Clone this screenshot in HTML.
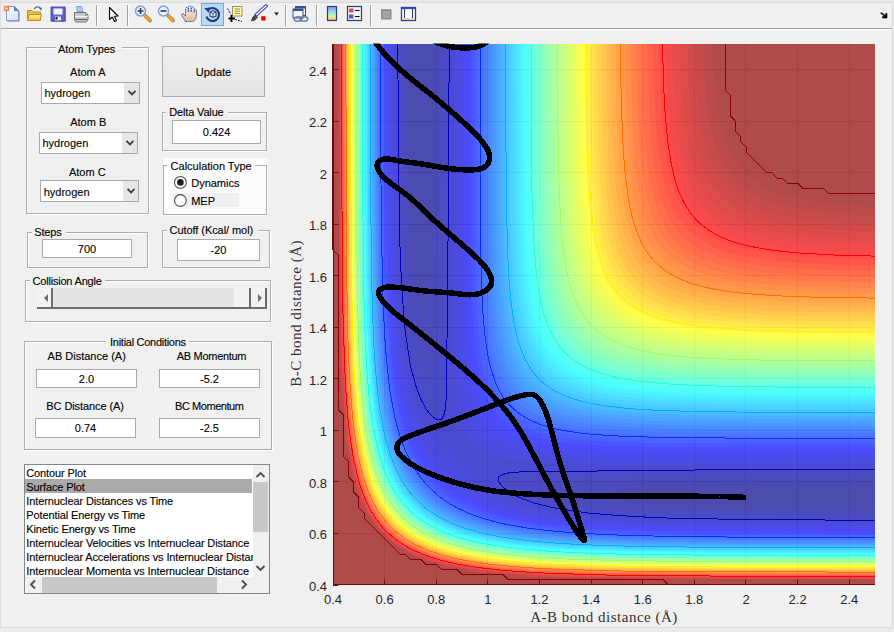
<!DOCTYPE html>
<html><head><meta charset="utf-8">
<style>
*{box-sizing:border-box}
html,body{margin:0;padding:0}
body{width:894px;height:632px;background:#f0f0f0;position:relative;overflow:hidden;font-family:"Liberation Sans",sans-serif;font-size:11px;color:#000}
.plot{position:absolute;left:0;top:0}
.abs{position:absolute}
.t{position:absolute;white-space:nowrap;line-height:13px;height:13px;-webkit-text-stroke:0.12px #000}
.ew{position:absolute;border:1px solid #fff}
.eg{position:absolute;border:1px solid #acacac}
.ed{position:absolute;background:#fff;border:1px solid #a9a9a9}
.pp{position:absolute;background:#fff;border:1px solid #a7a9ae}
.pa{position:absolute;right:0;top:0;width:15px;height:100%;background:#e6e6e6}
.btn{position:absolute;background:linear-gradient(#f0f0f0,#e5e5e5);border:1px solid #acacac}
</style></head><body>
<div class="abs" style="left:0;top:0;width:894px;height:2px;background:#e8e8e8"></div>
<div class="abs" style="left:0;top:2px;width:893px;height:1px;background:#dadada"></div>
<div class="abs" style="left:0;top:28px;width:893px;height:1px;background:#a0a0a0"></div>
<div class="abs" style="left:0;top:29px;width:893px;height:1px;background:#fdfdfd"></div>
<div class="abs" style="left:892px;top:2px;width:1px;height:626px;background:#dcdcdc"></div>
<div class="abs" style="left:0;top:627px;width:893px;height:1px;background:#dcdcdc"></div>
<div class="abs" style="left:893px;top:0;width:1px;height:632px;background:#ebebeb"></div>
<div class="abs" style="left:0;top:0;width:1px;height:628px;background:#dcdcdc"></div>
<div class="abs" style="left:0;top:628px;width:894px;height:4px;background:#ebebeb"></div>
<svg class="abs" style="left:0;top:0" width="894" height="30">
<defs>
<linearGradient id="gdoc" x1="0" y1="0" x2="1" y2="1"><stop offset="0" stop-color="#ffffff"/><stop offset="1" stop-color="#cfe0f8"/></linearGradient>
<linearGradient id="gfold" x1="0" y1="0" x2="0" y2="1"><stop offset="0" stop-color="#fff4b0"/><stop offset="1" stop-color="#f0c030"/></linearGradient>
<linearGradient id="gcb" x1="0" y1="0" x2="0" y2="1"><stop offset="0" stop-color="#8f8fe8"/><stop offset="0.45" stop-color="#8ee8e8"/><stop offset="0.75" stop-color="#f0f090"/><stop offset="1" stop-color="#f0a070"/></linearGradient>
<linearGradient id="gskin" x1="0" y1="0" x2="0" y2="1"><stop offset="0" stop-color="#fdf0e0"/><stop offset="1" stop-color="#e8b890"/></linearGradient>
</defs>
<rect x="96" y="5" width="1" height="21" fill="#a0a0a0"/><rect x="97" y="5" width="1" height="21" fill="#fff"/><rect x="127" y="5" width="1" height="21" fill="#a0a0a0"/><rect x="128" y="5" width="1" height="21" fill="#fff"/><rect x="285" y="5" width="1" height="21" fill="#a0a0a0"/><rect x="286" y="5" width="1" height="21" fill="#fff"/><rect x="316" y="5" width="1" height="21" fill="#a0a0a0"/><rect x="317" y="5" width="1" height="21" fill="#fff"/><rect x="370" y="5" width="1" height="21" fill="#a0a0a0"/><rect x="371" y="5" width="1" height="21" fill="#fff"/>
<!-- new doc -->
<path d="M7.5,7.5 H15.5 L19.5,11.5 V21.5 H7.5Z" fill="#6e78a8"/>
<path d="M6.5,6.5 H14.5 L18.5,10.5 V20.5 H6.5Z" fill="url(#gdoc)" stroke="#7f9ad8" stroke-width="1"/>
<path d="M14.5,6.5 V10.5 H18.5" fill="#7080c0" stroke="#6070b0" stroke-width="1"/>
<circle cx="6.5" cy="8.5" r="2.2" fill="#f6e080" stroke="#e87850" stroke-width="1.2"/>
<path d="M3.5,5.5 l1,1 M9.5,5.5 l-1,1 M3.5,11.5 l1,-1 M9.5,11.5 l-1,-1" stroke="#e87850" stroke-width="1"/>
<!-- open folder -->
<path d="M27.5,10.5 H32 L33.5,12 H40.5 V20.5 H27.5Z" fill="#e8c040" stroke="#c09020" stroke-width="1"/>
<path d="M29,14.5 H41.5 L40,20.5 H27.5Z" fill="url(#gfold)" stroke="#c09020" stroke-width="1"/>
<path d="M34,9 Q37,5.5 40.5,8" fill="none" stroke="#5070a0" stroke-width="1.2"/>
<path d="M39,8.5 L42,7.5 L41.2,10.5Z" fill="#405890"/>
<!-- save -->
<rect x="51.5" y="7.5" width="14" height="14" fill="#3a3a9a"/>
<rect x="51" y="7" width="14" height="14" fill="#6262cc" stroke="#4040a0" stroke-width="0.8"/>
<rect x="53.5" y="8.5" width="9" height="6" fill="#f4f4ff"/>
<rect x="55" y="16.5" width="6" height="4" fill="#e8e8f0"/>
<rect x="55.5" y="17" width="2" height="2.5" fill="#202020"/>
<!-- print -->
<path d="M76.5,6.5 H81.5 L83,11.5 H77.5Z" fill="#a8d0f8" stroke="#7090c0" stroke-width="0.8"/>
<path d="M74.5,12.5 H86 L88,15.5 V20 L86,22 H76 L74.5,20Z" fill="#c8c8c8" stroke="#707070" stroke-width="1"/>
<path d="M75,16.5 H87.5" stroke="#f8f8f8" stroke-width="1.2"/>
<path d="M75.5,19.5 H87" stroke="#5a5a5a" stroke-width="1"/>
<rect x="85" y="14.5" width="1.5" height="1.5" fill="#40c040"/>
<!-- arrow -->
<path d="M109.5,7.5 V19.5 L112.3,17 L114.5,21.5 L116.5,20.5 L114.4,16.2 L118,16Z" fill="#fff" stroke="#000" stroke-width="1.1" stroke-linejoin="round"/>
<!-- zoom in -->
<path d="M145,15.5 L150,20.5" stroke="#a86810" stroke-width="3.6" stroke-linecap="round"/>
<path d="M145,15.5 L150,20.5" stroke="#f0a840" stroke-width="2.2" stroke-linecap="round"/>
<circle cx="140.5" cy="11" r="5" fill="#e4f4fc" stroke="#8894cc" stroke-width="1.3"/>
<path d="M137.5,11 H143.5 M140.5,8 V14" stroke="#203880" stroke-width="1.6"/>
<!-- zoom out -->
<path d="M168,15.5 L173,20.5" stroke="#a86810" stroke-width="3.6" stroke-linecap="round"/>
<path d="M168,15.5 L173,20.5" stroke="#f0a840" stroke-width="2.2" stroke-linecap="round"/>
<circle cx="163.5" cy="11" r="5" fill="#e4f4fc" stroke="#8894cc" stroke-width="1.3"/>
<path d="M160.5,11 H166.5" stroke="#203880" stroke-width="1.6"/>
<!-- hand -->
<path d="M185.5,21.5 L181.8,15.5 Q181.2,13.2 183.5,13.8 L185.5,16 V9 Q185.6,7.2 187.2,7.4 Q188.3,7.6 188.3,9 V12 V7.2 Q188.5,5.6 190,5.8 Q191.2,6 191.2,7.4 V12 V8.2 Q191.6,6.8 193,7 Q194.2,7.3 194.2,8.8 V12.5 V10.5 Q194.6,9.4 195.6,9.6 Q196.6,9.9 196.5,11.5 L196.3,16.5 Q195.5,20.2 193.5,21.5Z" fill="url(#gskin)" stroke="#2850d8" stroke-width="1" stroke-dasharray="1.6 0.7"/>
<!-- rotate (pressed) -->
<rect x="201.5" y="3.5" width="22" height="22" fill="#bcd8f4" stroke="#6aa8e8" stroke-width="1"/>
<path d="M207.9,9.9 A6.5,6.5 0 1 1 206.4,16.7" fill="none" stroke="#243c78" stroke-width="2.2"/>
<path d="M204.3,8.2 L209.8,7.6 L208.6,12.8Z" fill="#243c78"/>
<path d="M210,12 L213,10.5 L216,12 V16 L213,17.5 L210,16Z" fill="#f0f4fc" stroke="#243c78" stroke-width="1.1"/>
<path d="M210,12 L213,13.5 L216,12 M213,13.5 V17.5" fill="none" stroke="#243c78" stroke-width="0.9"/>
<!-- data cursor -->
<rect x="232.5" y="6.5" width="9.5" height="9.5" fill="#fdf6b8" stroke="#9a9a48" stroke-width="1"/>
<path d="M234.5,9 H240 M234.5,11.2 H240 M234.5,13.4 H240" stroke="#8c8c40" stroke-width="0.9"/>
<path d="M227.5,8.5 L231,14.5 M235,19.5 L242,21.5" stroke="#0000f0" stroke-width="1" stroke-dasharray="2 1"/>
<path d="M228.5,18.5 H235 M231.5,15 V22" stroke="#000" stroke-width="1.9"/>
<!-- brush -->
<path d="M256,15 L266,6" stroke="#3a48a8" stroke-width="3.6" stroke-linecap="round"/>
<path d="M256,15 L266,6" stroke="#ffffff" stroke-width="1.4" stroke-linecap="round"/>
<path d="M251.5,21 Q252,16.5 255.5,15 L257.5,17 Q256,20.5 251.5,21Z" fill="#505050" stroke="#303030" stroke-width="0.8"/>
<rect x="260.8" y="15.8" width="5.2" height="5.2" fill="#ee0000" stroke="#fff" stroke-width="0.8"/>
<path d="M274,12.5 H279 L276.5,15.5Z" fill="#202020"/>
<!-- link -->
<rect x="295.5" y="6.5" width="10" height="9" fill="#f4f4f4" stroke="#38508a" stroke-width="1"/>
<rect x="295.5" y="6.5" width="10" height="2" fill="#38508a"/>
<rect x="293" y="9" width="10" height="9" fill="#f4f4f4" stroke="#38508a" stroke-width="1"/>
<rect x="293" y="9" width="10" height="2" fill="#38508a"/>
<ellipse cx="298" cy="19" rx="3.8" ry="2.2" fill="none" stroke="#6a7aa0" stroke-width="1.4"/>
<ellipse cx="304" cy="19" rx="3.8" ry="2.2" fill="none" stroke="#6a7aa0" stroke-width="1.4"/>
<!-- colorbar -->
<rect x="327.5" y="6.5" width="9" height="14" fill="url(#gcb)" stroke="#303e78" stroke-width="1.2"/>
<!-- legend -->
<rect x="347.5" y="6.5" width="14" height="14" fill="#f2f4fa" stroke="#303e78" stroke-width="1.2"/>
<rect x="349" y="8.5" width="4.5" height="4" fill="#e05050"/>
<rect x="349" y="14.5" width="4.5" height="4" fill="#5858e0"/>
<path d="M355,10.5 H359.5 M355,16.5 H359.5" stroke="#000" stroke-width="1.2"/>
<!-- gray square -->
<rect x="381" y="9.2" width="10.5" height="10.3" fill="#8c8c8c"/>
<rect x="382.5" y="11" width="7.5" height="7" fill="#a4a4a4"/>
<!-- window -->
<rect x="401.5" y="7.5" width="14" height="13" fill="#fff" stroke="#2c3e88" stroke-width="1.3"/>
<rect x="401.5" y="7.5" width="14" height="1.6" fill="#3050b0"/>
<path d="M404.5,9 V18 M412.5,9 V18" stroke="#2c3e88" stroke-width="1.1"/>
<rect x="402.3" y="18" width="12.5" height="2" fill="#d8d4b8"/>
<!-- corner arrow -->
<path d="M880.5,13 L882,12.8 L885.5,16 V13.5 H887 V18 H882.5 V16.5 H884.8 L881,13.5Z" fill="#000" stroke="#000" stroke-width="0.6"/>
</svg>
<svg class="plot" width="894" height="632" viewBox="0 0 894 632">
<defs><clipPath id="ax"><rect x="333" y="44" width="542" height="541"/></clipPath>
<clipPath id="tj"><rect x="300" y="43.5" width="594" height="560"/></clipPath></defs>
<rect x="333" y="44" width="542" height="541" fill="#fff"/>
<path d="M384.5,44V585M436.5,44V585M487.5,44V585M539.5,44V585M591.5,44V585M642.5,44V585M694.5,44V585M745.5,44V585M797.5,44V585M849.5,44V585M333,533.5H875M333,481.5H875M333,430.5H875M333,378.5H875M333,327.5H875M333,275.5H875M333,224.5H875M333,172.5H875M333,121.5H875M333,69.5H875" stroke="#dedede" stroke-width="1" fill="none"/>
<path d="M333.5,585v-5.4M333,585.5h5.4M384.5,585v-5.4M333,533.5h5.4M436.5,585v-5.4M333,481.5h5.4M487.5,585v-5.4M333,430.5h5.4M539.5,585v-5.4M333,378.5h5.4M591.5,585v-5.4M333,327.5h5.4M642.5,585v-5.4M333,275.5h5.4M694.5,585v-5.4M333,224.5h5.4M745.5,585v-5.4M333,172.5h5.4M797.5,585v-5.4M333,121.5h5.4M849.5,585v-5.4M333,69.5h5.4" stroke="#262626" stroke-width="1" fill="none"/>
<path d="M333.5,44V584.5H875" stroke="#262626" stroke-width="1" fill="none"/>
<g clip-path="url(#ax)" opacity="0.7" fill-rule="evenodd">
<rect x="333" y="44" width="542" height="541" fill="#8f0000"/>
<path fill="#9f0000" d="M711.5,44 713,69.5 715,90.6 717.9,111.1 721.1,126.4 725.3,140.2 730.5,152.6 736.4,162.8 745.1,173.3 756,182.3 766.2,188.3 778.6,193.5 792.5,197.6 807.8,200.8 828.3,203.7 849.4,205.7 875,207.2 875,579.7 585.8,579.1 528.2,578.2 517.3,577.1 513.5,576.1 511.1,574.8 473.8,573.1 468.7,572 465.4,569.7 462.4,569 445.6,567.9 442.4,566.8 439.7,564.6 426.4,562.4 424.5,561.4 423,559.5 421.7,558.8 414.1,557.5 411.9,556.3 410.4,554.1 403.4,552.1 400.6,548.6 396.4,547.5 393.8,546.1 391.5,543.5 387.4,541.1 384.8,537.5 381.9,535.8 380.6,533.3 377,530.7 374.6,526.6 372,524.3 370.6,521.8 369.5,517.6 365.9,514.7 364,507.7 361.8,506.2 360.5,504.1 359.2,496.5 358.6,495.2 356.6,493.7 355.4,491.1 353.5,478.4 351.2,475.8 350,471.9 349,456 348.4,452.8 346.3,450.2 345,445.1 343.9,414.5 343.2,407.2 341.4,403 340.3,396.6 339.2,370.4 338.3,44 711.5,44Z"/>
<path fill="#af0000" d="M702.8,44 704.4,74.7 706.3,95.7 709,116.2 712.6,134.1 716.5,147.5 722.7,162.2 729.4,173 736.8,181.7 745.7,189.4 756.6,196 769.4,201.5 783.5,205.8 802.7,209.7 823.2,212.4 844.3,214.3 875,215.9 875,579.2 604.3,578.6 560.8,578.1 537.1,577.3 527.5,576.5 518.7,574.8 511.2,574.1 478.9,572.4 473.1,571.3 469.2,569.7 465.9,569 448.8,567.1 445.6,566.2 441.1,564 428.3,561.5 423.8,558.8 415.5,556.6 411.6,553.7 404.7,551.2 402,548.6 396.4,546 388.9,540.3 382.9,534.7 377.8,529.2 372.1,521.8 369.5,516.2 366.9,513.5 364.4,506.6 361.4,502.6 359.2,494.3 356.1,488.6 354,477.1 351,470 349,452.3 345.8,440.4 343.2,399.7 341.9,393.4 340.9,383.8 339.8,354.4 338.8,44 702.8,44Z"/>
<path fill="#bf0000" d="M694.6,44 696,74.7 698,100.8 700.6,121.3 704.6,141.7 709.4,157.7 715,170.5 720.8,180 728.8,189.6 738.7,197.9 748.2,203.7 761.1,209.3 777.1,214.1 797.6,218.1 818,220.6 844.3,222.7 875,224.1 875,578.7 617.1,578 571,577.5 544.8,576.6 527.3,574.8 483.4,571.8 462.3,567.8 451.4,566.5 443.5,563.9 430.3,560.9 426,558.8 416.8,555.9 413.2,553.7 405.9,550.6 391.9,541.3 383.7,533.9 376.7,526.2 367.1,511.5 364.8,505.8 362.2,501.3 359.2,492.2 356.7,486.6 354.1,474.7 351.5,466.8 350.2,456 346.4,436.2 343.2,391.1 341.5,374.9 340.4,342.9 339.3,44 694.6,44Z"/>
<path fill="#cf0000" d="M686.8,44 688.3,79.8 690.2,105.3 692.8,127 696.5,146.8 701,162.8 706.7,176.5 713.8,188.4 721.4,197.3 730.4,204.9 742.2,212 756,217.7 772,222.2 791.8,225.9 813.6,228.5 839.2,230.4 875,231.8 875,578.1 626.7,577.5 580,576.9 549.9,575.9 487.9,571.4 453.9,566.1 431.5,560.3 418.1,555.4 407.2,550.2 392.5,540.7 382.9,531.8 377.2,525.2 367.6,510.4 362.7,500 357.1,484.7 352.1,464.9 347,433.6 342.2,368.5 341,332.7 340.3,249.7 339.9,44 686.8,44Z"/>
<path fill="#df0000" d="M679.4,44 680.8,80.4 682.8,110.4 685.2,131.5 688.8,151.9 693.1,167.9 699.2,183.2 705.1,193.5 709.4,199.2 714.4,204.6 725.3,213.6 735.5,219.4 750.9,225.5 766.9,229.8 787.3,233.4 808.4,235.8 838.5,237.9 875,239.2 875,577.6 612,576.8 569.1,575.9 529.5,573.7 489.8,570.8 455.2,565.5 433.5,560 419.4,555 408.4,549.9 393.5,540.3 383.6,531.3 377.6,524.3 368.1,509.6 363.1,498.8 357.6,483.4 352.4,462.4 347.4,430.4 342.7,362.1 341.5,326.3 340.8,249.7 340.4,44 679.4,44Z"/>
<path fill="#ef0000" d="M672.4,44 673.6,80.4 675.5,111.1 678.1,136.6 681.6,157.1 685.7,173 691.6,188.4 699,201.4 707.4,211.3 717.3,219.6 730.4,227.1 745.7,233 761.7,237 782.2,240.5 807.8,243.2 838.5,245 875,246.2 875,577.1 669,576.6 590.9,575.8 519.2,572.5 493,570.4 472.5,567.6 456.5,565 434.7,559.6 415.5,552.4 409.1,549.4 400.2,544.1 388,534.6 378.6,524.3 374,517.9 369.1,509.6 363.4,497.5 358.4,483.4 355.4,471.9 352.9,461.1 350.4,445.8 347.3,422.1 344,373.6 342.4,333.3 341.6,286.7 340.9,44 672.4,44Z"/>
<path fill="#ff0000" d="M665.7,44 666.9,84.9 668.7,116.2 671.4,141.7 674.7,162.2 678.6,178.1 684.3,193.6 688.8,202.3 692.1,207.5 700.6,217.7 710.5,226.1 716.4,229.9 725.2,234.3 740.6,240 756.6,243.9 777.1,247.3 802.7,249.9 834,251.7 875,252.9 875,576.6 678.5,576.2 596,575.2 523.7,572.2 496.2,570.1 471.9,566.9 452,563.3 431.5,557.8 415.5,551.6 400.7,543.5 388.7,534.1 379.1,523.7 374.6,517.4 369.5,508.8 363.7,496.4 358.8,482.2 356.1,471.9 353.4,459.8 351,445.8 347.8,420.2 344.6,373.6 342.9,327.6 342.1,281 341.4,44 665.7,44Z"/>
<path fill="#ff1000" d="M659.3,44 660.4,85.5 662.4,121.3 664.9,146.8 668.3,167.9 673.3,187.7 678.5,201.1 685.8,213.9 694.5,224.4 704.8,232.8 717.7,240.1 731,245.3 751.5,250.5 772,253.7 797.6,256.3 833.4,258.2 875,259.3 875,576.1 676,575.6 590.9,574.5 549.9,573.1 518.6,571.3 493.6,569.1 467.4,565.6 441.7,560.1 425.8,555.1 410.9,548.6 400.2,542.2 389.3,533.6 379.6,523 374.6,516 369.7,507.7 364.4,496 358.1,477.1 354.3,461.1 351.8,446.4 348.2,417.7 345.2,373.6 343.6,327.6 342.7,275.9 342,44 659.3,44Z"/>
<path fill="#ff2000" d="M653.1,44 654.1,85.5 655.9,121.3 658.1,147.5 661.9,172.4 667.2,193.5 672.8,207.8 679.2,219.2 688.1,230.1 699,239.1 709.9,245.4 725.3,251.5 746.4,256.7 771.3,260.5 797.6,262.7 833.4,264.5 875,265.5 875,575.5 680.5,575.1 591.5,573.9 549.9,572.5 519.2,570.8 498.1,569 472.5,565.7 451.4,561.8 431.5,556.3 415.5,550 403.6,543.5 396.2,538.4 390.1,533.3 380.6,523 373.5,512.8 365.8,497.5 358.6,476.4 353.2,451.5 348.5,415.1 346,378.7 344.3,332.1 343.2,270.7 342.5,44 653.1,44Z"/>
<path fill="#ff3000" d="M647.2,44 648.2,90.6 650,126.4 652.6,155.8 655.8,176.9 660.6,197.1 666.4,212.6 673.4,225.2 682.4,236.1 693.4,245.2 704.8,251.6 720.1,257.5 741.3,262.7 761.7,265.9 792.5,268.6 828.3,270.3 875,271.4 875,575 689.4,574.6 591.5,573.3 549.9,571.9 519.2,570.2 498.1,568.3 472.5,565.1 446.9,560 431.5,555.6 415.6,549.2 405,543.5 397.5,538.4 391.3,533.3 381.7,523 374.4,512.8 366.6,497.5 363.7,490.2 359.2,476.1 353.5,449.3 349.2,415.1 346.6,378.7 344.9,332.7 343.8,270.7 343,44 647.2,44Z"/>
<path fill="#ff4000" d="M641.5,44 642.4,90.6 643.9,126.4 646.4,157.1 649.4,178.8 653.7,198.6 659.4,215.1 663.2,223.3 667.1,229.9 671.8,236.3 677,242 683,247.4 688.8,251.5 695.4,255.4 704.1,259.5 720.1,264.9 740.6,269.3 761.7,272.2 792.5,274.6 828.3,276.2 875,277.1 875,574.5 689.4,574 590.9,572.7 554.4,571.5 520.2,569.7 498.1,567.7 473,564.6 451.4,560.4 436,556.2 420.7,550.6 406.6,543.5 395.1,535.4 384.8,525.5 375.4,512.8 368.8,500.7 363.7,488.1 360.3,477.1 354.4,450.9 350.3,420.2 347.5,383.8 345.5,332.7 344.3,270.7 343.6,44 641.5,44Z"/>
<path fill="#ff5000" d="M636,44 636.8,90.6 638.2,127 640.5,157.7 643.8,183.2 648.1,203.7 653.6,220 658,229.2 661.4,235 665.8,241.1 671.5,247.5 677.9,253.1 683.7,257.2 689.4,260.6 699,265.1 715,270.5 735.5,274.8 761.1,278.1 791.8,280.4 828.3,281.8 875,282.6 875,573.9 694.5,573.5 596,572.2 529.2,569.7 503.2,567.6 477.4,564.6 452,559.8 436,555.5 420.7,549.8 408.2,543.5 395.1,534.3 384.8,524.3 376.4,512.8 368.8,498.8 364.2,487.3 361,477.1 358.3,466.8 355.1,450.9 351,420.2 348,383.8 346,332.7 344.9,270.7 344.1,44 636,44Z"/>
<path fill="#ff6000" d="M630.6,44 631.5,95.1 632.8,131.5 635.1,162.8 638.4,188.4 642.8,208.8 648.5,225.7 652.5,234.3 655.9,240.1 660.5,246.5 666.2,252.9 672.8,258.6 678.5,262.7 684.3,266.1 693.9,270.5 709.9,275.8 730.4,280.2 756,283.4 787.3,285.7 823.8,287.1 875,287.9 875,573.3 694.5,572.9 596,571.7 529.5,569.1 503.2,566.9 477.7,563.9 453.4,559.5 436,554.7 421.2,549.2 409.8,543.5 401.7,538.4 395.1,533.3 384.8,523 377.3,512.8 369.1,497.5 364.8,486.6 361.8,477.1 358.6,464.8 355.8,450.9 351.6,420.2 348.4,378.8 346.6,332.7 345.5,270.7 344.7,44 630.6,44Z"/>
<path fill="#ff7000" d="M625.4,44 626.2,95.7 627.7,136.6 630,167.9 633.3,193.5 637.6,213.9 642.9,229.9 647.3,239.4 650.7,245.2 654.8,250.9 660.6,257.6 667,263.3 673.4,267.9 679.2,271.2 688.1,275.4 704.8,281 725.3,285.3 750.9,288.6 782.2,290.8 823.2,292.3 875,293.1 875,572.7 694.5,572.3 596.6,571.1 534.6,568.7 508.3,566.8 482.4,563.9 457.1,559.6 441.1,555.5 423.3,549.2 410.4,542.9 403.2,538.4 396.4,533.3 386,523 378.3,512.8 370,497.5 365.9,487.3 362.4,476.4 358.6,461.6 355.8,446.4 351.7,415.1 348.7,374.2 347.1,327.6 346.1,265.6 345.3,44 625.4,44Z"/>
<path fill="#ff8000" d="M620.4,44 621.2,100.8 622.7,141.7 625,173 628.3,198.6 632.6,219 638.2,235.6 642.4,244.6 645.8,250.3 650.4,256.7 656.1,263.1 662.7,268.8 668.3,272.8 674.1,276.2 683.7,280.7 700.2,286.1 722.1,290.6 750.2,294 782.2,296.1 823.2,297.4 875,298.1 875,572.1 699.7,571.7 601.1,570.6 539,568.3 509,566.2 487.6,563.9 462.3,559.9 446.3,556.1 425.8,549.4 414.4,544.1 405.3,538.8 400.2,535.1 390,526 379.7,513.4 373.4,502.6 368.8,492.8 364.4,480.4 358.2,456 353.4,425.3 349.7,379.3 347.9,337.2 346.7,270.7 345.9,44 620.4,44Z"/>
<path fill="#ff8f00" d="M615.5,44 616.3,100.8 617.6,141.7 619.7,173 622.6,198.6 627,220.9 632.9,239.4 637.6,249.7 641,255.4 645.1,261.2 650.8,267.6 657.3,273.3 663.2,277.5 669,281 679.2,285.7 697.7,291.6 720.1,295.9 745.7,298.9 777.1,300.9 818,302.3 875,303 875,571.5 694.5,571.1 596,569.9 560.2,568.7 529.5,567.1 503.2,565 482.7,562.5 462.3,559.1 442.5,554.3 426.4,548.8 415,543.5 406.3,538.4 400.2,534 390,524.8 380.4,512.8 374,502 369.3,491.7 364.4,477.8 358.6,454.4 353.5,420.2 350.6,383.8 348.5,337.2 347.4,275.9 346.5,44 615.5,44Z"/>
<path fill="#ff9f00" d="M610.7,44 611.4,100.8 612.7,142.4 614.9,177.5 617.9,203.7 622.2,225.8 624.8,235 628.5,245.2 632.5,253.7 636.5,260.5 641.2,266.9 646.4,272.7 652.3,277.9 658.1,282.1 664.9,286.1 674.1,290.3 692.9,296.3 715,300.6 741.3,303.6 776.5,305.8 818,307.1 875,307.8 875,570.9 699,570.5 601.1,569.4 560.2,568.1 529.5,566.4 505.4,564.6 482.7,561.8 464.5,558.8 445.3,554.3 429.8,549.2 415.5,542.8 407.9,538.4 400.6,533.3 390,523.5 381.5,512.8 374.6,501.3 369.5,490 365,477.1 359.2,453.8 354.3,420.2 351.3,383.8 349.2,337.8 348,281 347.1,44 610.7,44Z"/>
<path fill="#ffaf00" d="M606.1,44 606.8,105.3 608.1,146.8 610.3,182.6 613.4,208.8 617.5,229.9 620.3,240.1 623.8,249.7 627.4,257.4 632.1,265.6 636.4,271.4 641.4,277 646.6,281.7 653,286.4 661.2,291.2 668.3,294.5 678.5,298.2 688.8,301.1 709.9,305.1 736.1,308.2 772,310.4 813.6,311.7 875,312.4 875,570.3 694.5,569.9 601.8,568.7 560.2,567.4 529.5,565.8 506.1,563.9 482.7,561.1 462.3,557.6 441.8,552.4 425.8,546.7 410.6,539 400.2,531.7 390,522.1 382.6,512.8 374.6,499.4 369.3,487.3 365.8,477.1 362.9,466.8 359.4,450.9 355,420.2 351.9,383.8 349.7,332.7 348.5,270.7 347.7,44 606.1,44Z"/>
<path fill="#ffbf00" d="M601.5,44 602.2,106 603.6,151.9 605.9,188.4 608.9,213.9 613.1,235 616,245.2 619.7,255.2 622.4,261.2 627.4,269.8 631.7,275.9 637,281.6 642.7,286.8 648.8,291.2 657.4,296.1 663.4,298.9 673.4,302.5 683.7,305.4 704.8,309.6 730.4,312.6 766.9,314.9 812.9,316.3 875,316.9 875,569.7 699,569.3 601.1,568.1 560.2,566.8 529.5,565.1 508.3,563.4 482.7,560.4 461.6,556.6 441.1,551.4 425.8,545.7 411.3,538.4 400.2,530.5 390,520.7 380.3,507.7 374.6,497.5 369.5,485.3 365.1,471.9 359.3,445.8 355.1,415.1 352.3,379.3 350.4,332.7 349.2,270.7 348.3,44 601.5,44Z"/>
<path fill="#ffcf00" d="M597.1,44 597.8,106 599,151.9 601.1,188.4 604,214.5 608.7,239.4 614.3,257.3 618,265.6 622.2,273.2 627.4,280.3 632.5,286.1 638.2,291.2 645.4,296.3 653,300.5 661.3,304.2 679.2,309.8 704.1,314.5 730.4,317.4 766.9,319.5 812.9,320.7 875,321.4 875,569.1 704.1,568.7 606.2,567.5 534.6,564.8 509,562.7 487.9,560.4 467.4,557 446.9,552.2 430.9,546.9 415.5,539.8 405.3,533.3 394.4,524 384.8,512.9 378.3,502.6 374,493.9 369.2,482.2 364.6,466.8 362.2,456.6 357.7,430.4 353.5,387.6 351.2,337.8 349.9,275.9 349,44 597.1,44Z"/>
<path fill="#ffdf00" d="M592.8,44 593.5,111.1 594.7,157.1 596.7,191.5 599.7,219 603.9,242 606.2,250.8 609.8,261.2 617.1,276.3 622.2,283.7 628,290.2 634.9,296.3 642.3,301.4 656.7,308.4 674.7,314.1 699.7,318.8 727.2,321.8 761.7,323.8 807.8,325 875,325.7 875,568.4 699.7,568 601.8,566.7 539,564.4 513.5,562.4 487.9,559.6 462.3,555.2 446.3,551.2 430.9,545.9 416.1,539 405.3,532.1 395.1,523.4 386,512.8 379.4,502.6 374.2,492.4 369.5,480.3 363,456.6 357.8,425.3 353.9,383.8 351.8,337.2 350.5,270.7 349.6,44 592.8,44Z"/>
<path fill="#ffef00" d="M588.6,44 589.2,111.1 590.3,157.7 592.3,193.5 595.5,224.1 599.8,247 605.6,265.6 609.4,274.2 613.1,281 617.1,286.8 623.7,294.4 631.2,301 637.4,305.2 651.7,312.4 669,318 694.5,323 725.3,326.2 761.1,328.1 807.8,329.3 875,329.9 875,567.7 704.1,567.3 606.9,566.2 544.2,564 518.6,562.1 492.2,559.5 467.4,555.4 452,551.9 436,546.9 420.7,540.3 408.6,533.3 396.2,523 387.3,512.8 379.7,501.3 374.6,490.9 369.5,477.5 363.7,456 358.5,425.3 354.3,378.7 352.4,332.7 351.2,270.7 350.3,44 588.6,44Z"/>
<path fill="#ffff00" d="M584.4,44 585,111.1 586,157.7 587.8,193.5 590.9,224.8 595.5,250.3 598.2,260.5 601.8,270.7 606.2,280.4 609.6,286.1 613.9,292.2 619.8,298.9 626.7,304.9 632.5,308.9 638.2,312.3 647.9,316.7 658.1,320.3 668.3,323 693.9,327.6 725.3,330.6 761.1,332.4 807.8,333.5 875,334 875,567 704.1,566.7 606.2,565.5 544.8,563.3 518.6,561.4 493,558.8 467.4,554.6 451.4,550.8 431.5,544.3 420.1,539 410.3,533.3 397.7,523 388.5,512.8 379.7,499.3 374,487.3 370.1,476.4 363.7,452.3 358.6,419.9 355.1,378.7 353.2,337.2 351.9,270.7 351,44 584.4,44Z"/>
<path fill="#efff10" d="M580.3,44 580.8,111.1 582,162.2 583.8,198.6 586.9,229.2 591.5,254.8 597.4,273.9 601.1,282.5 606.1,291.2 610.7,297.5 615.8,303.1 621.6,308.2 627.4,312.4 636.1,317.4 645.9,321.6 664.5,327.2 689.4,331.6 720.1,334.6 756.6,336.5 807.8,337.6 875,338.1 875,566.4 704.1,566 606.2,564.8 539.7,562.2 513.5,560.2 493,557.9 470.2,554.3 451.4,550 433.6,544.1 420.9,538.4 410.4,532.1 399.1,523 389.7,512.8 384.8,505.9 379.9,497.5 374.6,486.2 371,476.4 367.9,466.2 364.3,450.9 358.8,415.1 355.8,378.7 353.7,332.7 352.6,275.9 351.7,44 580.3,44Z"/>
<path fill="#dfff20" d="M576.4,44 576.9,116.2 578,167.3 579.9,203.7 583,234.3 587,257 590,268.2 593,277.1 596.9,286.1 601.1,293.7 606.6,301.4 611.4,306.7 617.1,311.9 624.2,316.9 632.5,321.6 640.4,325 658.9,330.8 684.3,335.5 715,338.5 751.5,340.4 802.7,341.6 875,342.1 875,565.7 709.9,565.3 616.5,564.3 549.3,562 518.6,559.9 498.1,557.8 472.5,553.9 452,549.2 436.2,544.1 424.4,539 410.4,530.8 400.6,523 391.1,512.8 383.9,502.6 379.1,493.7 374,482.2 369.5,468.4 366.3,456 363.7,443.5 360.9,425.3 358.6,405.2 357,384.4 354.7,337.8 353.3,281 352.4,44 576.4,44Z"/>
<path fill="#cfff30" d="M572.4,44 572.9,116.2 574,167.3 575.7,203.7 578.6,235 583,260.5 585.6,270.7 589,281 592.3,288.6 596.6,296.8 601.8,304.3 607.5,310.8 614.3,316.7 621.7,321.8 629.9,326.2 637.6,329.5 647.8,332.9 658.1,335.5 682.4,339.7 714.4,342.7 750.9,344.4 802.7,345.5 875,346 875,565 704.8,564.6 616.5,563.6 544.8,561 519.2,559.2 498.1,556.9 477.6,554 455.5,549.2 439,544.1 425.8,538.6 415.5,533 408.5,528.2 402.3,523 392.5,512.8 384.8,502.1 379.5,492.4 375.1,482.2 368.4,461.1 365,445.8 362.5,430.4 359.9,410 358,388.9 355.4,337.8 354,275.9 353,44 572.4,44Z"/>
<path fill="#bfff40" d="M568.6,44 569.7,157.7 571,193.5 573.1,224.1 576.3,249.7 580.6,270.7 585.6,286.1 592,299.5 597.1,307.2 604.3,315.4 611.9,321.8 619.7,326.8 627.4,330.7 637.6,334.7 647.8,337.8 663.8,341.3 694.5,345.3 735.5,347.9 792.5,349.3 875,349.9 875,564.3 704.8,563.9 606.9,562.6 539,559.9 518.6,558.3 493,555.5 477.6,553.1 456.7,548.6 441.1,543.9 425.8,537.4 415.5,531.7 403.9,523 393.9,512.8 384.8,500 379.7,490.4 374.6,478.1 368.1,456 365,440.6 362.6,425.3 358.5,384.4 356,332.7 354.7,270.7 353.7,44 568.6,44Z"/>
<path fill="#afff50" d="M564.8,44 565.9,162.2 567.3,198.6 569.4,229.2 572.2,251.6 576.2,272 581.5,289.3 584.8,296.9 588.6,304 594.2,312.3 601.1,319.8 609,326.3 617.1,331.4 627.4,336.2 637.6,339.8 649.2,342.9 663.2,345.7 694.5,349.5 735.5,351.8 792.2,353.1 875,353.7 875,563.5 704.1,563.1 606.9,561.8 544.1,559.5 518.6,557.5 493,554.6 467.4,550.1 452,546.3 436,540.8 421.4,533.9 410.4,526.8 400.2,518.1 391.3,507.7 384.8,497.9 379.4,487.3 375.1,476.4 370.5,461.7 368.1,451.5 365,435.5 362.8,420.2 358.9,378.7 356.8,332.7 355.5,270.7 354.5,44 564.8,44Z"/>
<path fill="#9fff60" d="M561,44 562.1,162.2 563.3,198.6 565.4,229.9 568.4,255.4 572.4,275.9 577.7,293.1 581.3,301.4 585.2,308.4 590.9,316.7 596.1,322.5 602.4,328 612,334.4 621.6,339.2 632.5,343.2 644,346.3 658.1,349.2 689.4,353.1 730.4,355.5 787.3,356.9 875,357.4 875,562.8 704.8,562.3 611.4,561.2 547.2,558.8 519.2,556.7 497.2,554.3 472.5,550.3 457.1,546.7 441.1,541.7 425.8,535 414.2,528.2 401.7,517.9 392.7,507.7 385.9,497.5 380.3,486.6 376.2,476.4 372.8,466.2 368.8,450.9 363.6,420.2 359.7,378.7 357.6,332.7 356.2,270.7 355.3,44 561,44Z"/>
<path fill="#8fff70" d="M557.3,44 558.4,167.3 559.7,203.7 561.8,234.3 564.9,260.5 569,281 574.2,297.5 581.3,312 586.4,319.4 593.1,327 599.9,332.7 607.6,337.8 617.1,342.6 627.4,346.5 640.8,350.2 655.6,353.1 688.8,357.1 730.4,359.4 787.3,360.6 875,361.1 875,562 704.8,561.6 612,560.4 549.9,558.1 523.7,556.2 499.3,553.7 472.5,549.3 456.5,545.5 437.1,539 425.8,533.8 415.5,527.7 403.4,517.9 394.4,508.1 387.2,497.5 381.8,487.3 377.5,477.1 374,466.6 369.5,449.3 363.9,415.1 360.6,378.7 358.5,337.8 357,270.7 356.1,44 557.3,44Z"/>
<path fill="#80ff80" d="M553.7,44 554.8,169.8 556.1,208.8 558.2,239.4 561.4,265.6 565.7,286.1 570.9,302 575.3,311.6 578.2,316.7 584.5,325.3 590.9,332 598.1,337.8 606.4,342.9 617.1,347.8 627.4,351.3 637.6,354 653,357 684.3,360.6 729.7,363.1 787.3,364.3 875,364.7 875,561.2 704.8,560.8 612,559.6 549.9,557.2 523.7,555.4 503.2,553.3 477.6,549.4 462.3,546 446.3,541.3 430.9,535.1 418.4,528.2 411.1,523 405.3,518.2 395.6,507.7 389.3,498.8 384.8,491 379.1,478.2 374.6,465.2 370.9,450.9 368.7,440.6 365.5,420.2 361.8,383.8 359.2,335.6 357.9,275.9 356.8,44 553.7,44Z"/>
<path fill="#70ff8f" d="M550.1,44 551.2,173 552.6,213.9 554.7,244.6 558.1,270.7 562.4,291.2 567.8,307.2 571,314.1 575.5,321.8 581.3,329.5 589,337.2 596.6,342.9 605.6,348 617.1,352.8 627.4,356 637.6,358.5 653,361.2 684.3,364.6 726.5,366.7 782.2,367.8 875,368.3 875,560.4 709.9,560 617.1,558.9 549.9,556.4 521.6,554.3 503.2,552.3 482.2,549.2 461.6,544.8 443.1,539 430.9,533.8 420.5,528.2 413.1,523 406.9,517.9 397.2,507.7 389.9,497.5 384.3,487.3 379.7,476.9 374.6,461.5 372.1,451.5 368.8,436 366.4,420.2 362.7,383.8 360,332.7 358.6,273.6 357.6,44 550.1,44Z"/>
<path fill="#60ff9f" d="M546.5,44 547.5,173 548.8,213.9 550.8,244.6 553.9,270.7 557.9,291.2 563.5,309.1 566.9,316.7 570.8,323.8 576.2,331.4 582.7,338.5 590.9,345.1 600,350.6 610.7,355.4 621.6,359 632.5,361.7 647.8,364.5 682.4,368.3 725.3,370.4 782.2,371.4 875,371.9 875,559.7 709.9,559.2 617.1,558.1 549.9,555.5 524.7,553.7 503.2,551.3 482.7,548.3 462.3,543.9 446.3,539 432.4,533.3 420.7,526.7 408.8,517.9 398.8,507.7 391.4,497.5 385.3,486.6 381.1,477.1 374,455 368.1,425.3 363.5,383.8 360.9,332.7 359.4,270.7 358.7,183.2 358.4,44 546.5,44Z"/>
<path fill="#50ffaf" d="M543,44 544,177.5 545.3,217.7 547.2,247.8 550.5,275.9 554.7,296.3 560.2,313.3 567.4,327.6 573.6,336.2 580,342.9 586.4,348.1 596,354 606.2,358.6 617.1,362.3 627.4,364.9 642.7,367.9 674.1,371.4 720.1,373.8 781.6,375 875,375.4 875,558.8 709.9,558.4 617.1,557.2 549.3,554.6 528.8,553.1 503.2,550.4 487.9,548.2 465.1,543.5 447.9,538.4 435.2,533.3 420.7,525.2 410.7,517.9 400.5,507.7 392.9,497.5 387,487.3 382.3,477.1 378.6,466.8 374,450.9 368.3,420.2 364.1,379.3 361.8,332.7 360.3,270.7 359.5,183.2 359.2,44 543,44Z"/>
<path fill="#40ffbf" d="M539.5,44 540.5,178.1 541.7,219 543.8,252.2 547.3,281 551.6,301.4 556.9,317.4 560.2,324.7 564.8,332.7 570.4,340.2 577.5,347.4 585,353.1 593.8,358.3 605.8,363.4 616.5,366.7 627.4,369.2 642.7,371.9 674.1,375.2 720.1,377.4 781.6,378.5 875,378.8 875,557.9 709.9,557.5 617.1,556.3 554.4,554 528.8,552.1 503.2,549.4 482.7,546.1 467.4,542.9 451.5,538.4 436,532.2 425.8,526.9 412.9,517.9 402.3,507.7 394.4,497.5 389.3,489 383.6,477.1 379.5,466.2 374.6,448.5 368.8,416.6 365.1,378.7 362.7,332.7 361.2,270.7 360.4,183.2 360.1,44 539.5,44Z"/>
<path fill="#30ffcf" d="M536.1,44 537,183.2 538.3,224.1 540.3,255.4 544,286.1 548.5,306.5 554.3,323.1 558.2,331.2 561.9,337.2 568.4,345.5 575.5,352.3 583.2,357.8 590.9,362.1 601.1,366.4 611.4,369.7 622.2,372.4 637.6,375.2 670.5,378.7 715,380.8 777.1,381.9 875,382.3 875,557 709.9,556.6 617.1,555.4 560.2,553.4 533.9,551.6 508.3,549.1 482.7,545.1 467.4,541.7 452,537.2 436,530.8 425.8,525.4 415,517.9 404.1,507.7 395.1,496.1 389.8,487.3 384.7,476.4 379.4,461.7 375.1,445.8 369.5,413.6 366.1,378.7 363.7,337.6 362.1,270.7 361,44 536.1,44Z"/>
<path fill="#20ffdf" d="M532.7,44 533.6,188.4 534.9,229.2 537,260.5 540,286.1 544.7,309.1 550.9,327 554.7,334.6 558.6,341 564,348 570.4,354.4 578.7,360.7 587.7,365.7 596.6,369.6 609.1,373.6 622.2,376.6 637.6,379.2 670.9,382.4 715,384.4 777.1,385.4 875,385.7 875,556.1 709.9,555.7 617.1,554.5 555,552 528.8,550.1 508.3,548 483.5,544.1 467.4,540.5 451.4,535.7 436,529.4 424.6,523 417.3,517.9 411.1,512.8 401.6,502.6 395.1,493.6 390,484.7 384.2,471.9 379.7,458.7 376.3,445.8 374,434.8 370.8,415.1 367.1,378.7 364.5,332.1 363.1,275.9 362.3,188.4 361.9,44 532.7,44Z"/>
<path fill="#10ffef" d="M529.3,44 530.1,188.4 531.4,229.9 533.4,263.1 536.8,291.2 541,311.6 544.1,321.8 547,329.5 550.7,337.2 555,344.5 560.3,351.2 567.3,358.3 575.5,364.4 584,369.1 594.5,373.6 606.2,377.2 617.1,379.7 632.5,382.4 663.8,385.6 709.9,387.8 772,388.8 875,389.1 875,555.2 715,554.8 627.4,553.8 560.2,551.3 533.9,549.6 513.5,547.5 489.8,544.1 472.5,540.5 456.5,536.1 441.1,530.3 428.3,523.7 419.6,517.9 408,507.7 399.4,497.5 395.1,491 389.3,480.3 384.8,469.9 379.7,454.3 376.4,440.6 373.4,425.3 370.6,404.9 368.5,384.4 365.7,337.8 364,275.9 363.2,188.4 362.8,44 529.3,44Z"/>
<path fill="#00ffff" d="M525.9,44 526.7,188.4 528,233.7 529.9,265.6 533.5,295.7 538,316.7 543.7,333.3 548,342.2 551.6,348 558.3,356.3 565.3,363 573,368.5 581.3,373 590.9,377 601.8,380.4 616.5,383.8 631.8,386.2 663.8,389.3 709.9,391.2 772,392.2 875,392.5 875,554.3 715,553.9 627.4,552.8 560.2,550.3 534.7,548.6 513.5,546.4 492.8,543.5 471.2,539 452.1,533.3 441.1,528.8 430,523 422.1,517.9 415.5,512.8 405.3,502.6 400.2,496 394.5,487.3 389.3,477.1 384.8,466.1 379.7,449.5 373.8,420.2 369.1,378.7 366.3,327.6 364.8,265.6 364.1,183.2 363.7,44 525.9,44Z"/>
<path fill="#00efff" d="M522.5,44 523.3,193.5 524.5,236.3 526.7,270.7 529.7,296.9 532.3,311 534.8,321.2 540.6,337.8 544.8,346.1 549.3,353.1 555,360.1 562.7,367.1 570.4,372.5 579.4,377.2 590.9,381.6 601.1,384.6 612,387 627.4,389.5 660.6,392.7 704.8,394.6 766.9,395.5 875,395.8 875,553.3 715,552.9 622.2,551.6 558.7,549.2 533.9,547.4 508.3,544.6 493,542.2 472.5,538 456.5,533.4 441.8,527.5 430.9,521.8 418,512.8 407.4,502.6 400.2,493.4 395.1,485.2 388.6,471.9 384.5,461.1 379.7,444.3 374.1,414.5 369.8,373.6 367.4,327.6 365.9,265.6 365.1,182.6 364.7,44 522.5,44Z"/>
<path fill="#00dfff" d="M519.2,44 519.9,193.5 521,236.9 523,270.7 526.2,299.5 530.6,321.8 533.8,332.7 536.8,340.4 540.5,348 544.8,355.2 550.8,362.7 557.4,369.1 565.3,374.9 574.5,380 585.5,384.4 596,387.6 607.5,390.2 623.5,392.8 658.1,396.1 704.8,398 766.9,398.9 875,399.2 875,552.3 715,551.8 622.2,550.6 565.3,548.5 539,546.7 513.5,544.1 493,541 477.6,537.9 460.6,533.3 446.3,527.9 436,523 427.6,517.9 420.5,512.8 410.4,503.6 401.4,492.4 395.1,482.1 390,471.5 384.8,457.6 381.5,445.8 378,430.4 374.6,410 370.9,373.6 368.6,332.1 366.9,265.6 366.1,182.6 365.8,44 519.2,44Z"/>
<path fill="#00cfff" d="M515.8,44 516.6,198.6 517.8,243.3 519.7,275.9 523.1,305.2 527.6,327 530.8,337.2 533.8,344.8 537.9,353.1 541.5,358.9 548.2,367.2 555,373.6 562.3,378.7 571,383.4 580.6,387.4 592.2,390.9 606.2,394.1 622.2,396.5 658.1,399.7 704.1,401.5 766.9,402.3 875,402.5 875,551.2 720.1,550.8 627.4,549.7 565.3,547.3 518.4,543.5 493,539.7 477.6,536.5 462.3,532.2 446.9,526.5 431.5,518.6 423.2,512.8 411.8,502.6 403.4,492.4 399.9,487.3 393.9,476.4 389.4,466.2 384.2,450.6 379.7,432.4 377.5,420.2 374.6,399.8 372.5,378.7 369.7,332.1 368.1,275.9 367.2,188.4 366.8,44 515.8,44Z"/>
<path fill="#00bfff" d="M512.5,44 513.2,203.7 514.4,247.1 516.5,281 519.4,307.2 522,321.2 524.4,331.4 530.2,348 534.3,356.3 538.7,363.4 544.8,370.8 552.1,377.4 560.2,383 569.1,387.6 580.6,392 590.9,394.9 602.4,397.4 617.5,399.8 653,403 699.7,404.8 766.2,405.6 875,405.8 875,550.2 720.1,549.8 631.8,548.7 565.3,546.2 536.5,544.1 519.2,542.3 496.5,539 477.6,535 457.1,529 446.3,524.5 434.8,518.6 425.8,512.7 414.2,502.6 405.3,492.2 400.2,484.5 394.4,473.7 389.4,461.7 384.8,447.6 378.8,420.2 375.9,399.8 373.7,379.3 370.9,332.1 369.1,270.7 368.2,187.7 367.9,44 512.5,44Z"/>
<path fill="#00afff" d="M509.2,44 509.9,208.8 511.1,252.2 513.2,286.1 516.3,312.3 518.6,324.9 521.3,335.9 523.9,344.2 527.4,353.1 531.4,360.8 535.9,367.7 541.3,374.2 549,381.2 555.7,385.8 565.3,390.9 575.5,394.9 587,398.3 601.1,401.2 617.1,403.6 653,406.6 699.7,408.2 764.3,409 875,409.2 875,549.1 715,548.6 627.4,547.4 560.2,544.7 539.7,543.1 514.1,540.3 498.1,537.9 476.3,533.3 459.5,528.2 446.9,523 436,517.3 422.4,507.7 411.9,497.5 405.3,489.1 400.2,481.2 395.1,471.3 390,458.7 384.8,441.9 379.1,413.5 374.5,373.6 371.7,322.5 370.1,260.5 369.3,178.1 368.9,44 509.2,44Z"/>
<path fill="#009fff" d="M505.8,44 506.5,208.8 507.6,252.9 509.5,286.1 513,316.7 517.3,337.8 520.5,348 524.3,357.5 528.2,364.8 532.7,371.6 538.7,378.7 544.8,384.2 552.5,389.6 562.3,394.7 573.6,398.9 585.1,402.1 596.6,404.5 612.1,406.8 647.8,409.9 694.5,411.6 761.1,412.3 875,412.5 875,547.9 720.1,547.5 627.4,546.2 560.7,543.5 514.4,539 493,535.4 477.6,532 462.3,527.4 446.9,521.1 436,515.2 425.3,507.7 415.5,498.7 406.3,487.3 400.2,477.5 394.7,466.2 390,453.7 384.8,435.6 379.2,404.9 375.4,368.5 372.9,322.5 371.3,260.5 370.5,178.1 370.1,44 505.8,44Z"/>
<path fill="#008fff" d="M502.5,44 503.1,213.9 504.3,258 506.2,291.2 509.6,320.6 514.3,342.9 517.6,353.1 520.4,360.2 524.7,368.5 528.8,374.7 535.2,382.2 542.8,388.9 550.6,394 560.2,398.8 570.4,402.5 581.3,405.5 596,408.4 611.4,410.6 647.8,413.5 693.9,415 761.1,415.7 875,415.8 875,546.7 725.3,546.3 632.5,545.1 575.5,543 549.3,541.2 523.7,538.8 503.2,535.8 487.9,532.8 470,528.2 455.6,523 441.8,516.4 428.4,507.7 417.1,497.5 410.4,489.7 405.1,482.2 399.4,471.9 394.5,461.1 389.3,446.1 384.8,428.5 382.3,415.1 379.7,398 377.3,374.2 374.5,332.1 372.7,270.7 371.7,183.2 371.4,44 502.5,44Z"/>
<path fill="#0080ff" d="M499.1,44 499.7,213.9 500.8,260.5 502.8,295 505.8,322.5 508.3,336.4 510.9,346.8 513.7,355.7 517,364 521.1,372 525.5,378.7 531.6,385.7 539,392.3 546.1,397 555,401.6 565.3,405.5 576.8,408.8 590.9,411.7 606.9,413.9 642.7,416.8 689.4,418.4 756,419 875,419.2 875,545.5 720.1,545 632.5,543.8 570.4,541.3 544.2,539.4 524.3,537.3 498.7,533.5 482.7,529.9 462.3,523.7 451.4,519.1 439.5,512.8 431.8,507.7 425.8,503 415.5,492.8 410.4,486.4 405.3,478.7 399.6,468 394.7,456.6 390,442.3 383.9,415.1 380.8,394 378.6,373.6 375.7,327.6 373.9,270.7 373,183.2 372.6,44 499.1,44Z"/>
<path fill="#0070ff" d="M495.8,44 496.3,219 497.4,265.6 499.4,300.1 502.7,328.2 505.3,342.3 507.9,352.5 514.1,369.1 518.6,377.3 523.1,383.8 529.4,390.8 536.5,396.7 544.8,402 554.4,406.5 565.3,410.2 576.2,413 590.9,415.8 606.2,417.7 642.7,420.4 689.4,421.8 756,422.4 875,422.5 875,544.3 725.3,543.8 637.6,542.6 570.4,539.9 548.3,538.4 524.3,535.8 506.9,533.3 482.7,528.2 466,523 453.5,517.9 443.6,512.8 430.9,504.3 423,497.5 413.8,487.3 405.3,474.6 400.2,464.8 395.1,452.2 391.4,440.6 388.7,430.4 384.6,410 379.7,370.1 376.9,322.5 375.1,260.5 374.2,178.1 373.8,44 495.8,44Z"/>
<path fill="#0060ff" d="M492.4,44 492.8,219.6 493.8,265.6 495.7,301.4 498.9,330.8 503.5,353.1 506.6,363.4 510.3,372.3 513.9,379.3 519.1,387 525.3,394 532,399.8 539.7,404.8 549.9,409.8 560.2,413.4 571,416.3 585.8,419.1 601.1,421.1 637.6,423.8 684.3,425.2 750.9,425.8 875,425.9 875,542.9 725.3,542.4 632.5,541 570.4,538.5 523.7,534.1 490.3,528.2 472,523 458.5,517.9 446.9,512.2 439.5,507.7 432.4,502.6 421.2,492.4 415.5,485.8 409.4,477.1 403.3,466.2 398.7,456 393.4,440.6 389.4,425.3 385.5,404.9 381.2,368.5 378.5,327 376.5,260.5 375.6,178.1 375.2,44 492.4,44Z"/>
<path fill="#0050ff" d="M489,44 489.4,224.8 490.4,270.7 492.3,306.5 495.5,335.9 500.2,358.3 503.4,368.5 506.9,376.8 510.6,383.8 515.4,390.8 521.8,398 528.8,403.9 536.3,408.7 544.8,412.9 555,416.6 566.6,419.7 580.6,422.5 596.6,424.6 632.5,427.3 679.2,428.7 745.7,429.3 875,429.3 875,541.4 725.3,540.9 637.6,539.7 580.6,537.5 555,535.7 530.4,533.3 508.3,529.9 493,526.8 478.8,523 462.3,517.1 451.4,512 436.3,502.6 424.6,492.4 415.5,481.9 410.4,474.4 405.3,465.3 400.2,454.1 395.1,439.5 390.1,420.2 388.2,410 384.8,388 382.8,368.5 379.7,321.8 378.1,265.6 377.1,178.1 376.7,44 489,44Z"/>
<path fill="#0040ff" d="M485.5,44 485.9,229.9 486.8,275.9 488.8,311.6 492.1,341 496.8,363.4 500.1,373.6 503.1,380.6 507.6,388.9 511.6,394.7 517.8,401.7 524.3,407.2 533.3,412.9 542.2,417.2 553.1,420.9 565.3,424 580.6,426.7 594.7,428.4 631.8,431 678.5,432.3 875,432.8 875,540 730.4,539.5 644.8,538.4 580.6,535.8 553.2,533.9 533.9,531.8 509,528.2 493,524.7 472.5,518.7 462.3,514.6 448.6,507.7 440.6,502.6 428.3,492.4 419.1,482.2 410.4,469.6 405.3,459.9 400.2,447.8 396.2,435.5 390,409.3 386.9,388.9 384.5,368.5 381.4,322.5 379.5,265 378.6,183.2 378.1,44 485.5,44Z"/>
<path fill="#0030ff" d="M482,44 482.3,234.3 483.3,281 485,314.8 488.1,343.6 490.6,357.6 493.1,367.8 496.2,377.2 499.4,384.9 503.6,392.7 508.3,399.5 514.1,405.8 521.8,412.2 529.5,416.9 539,421.3 549.3,424.8 560.2,427.6 575.5,430.3 590.9,432.2 626.7,434.6 674.1,435.9 875,436.3 875,538.5 725.9,537.9 637.6,536.5 575.5,533.8 555,532.2 529.5,529.3 513.5,526.8 495.2,523 477.5,517.9 464.4,512.8 452,506.6 438.4,497.5 427.2,487.3 420.7,479.8 415.1,471.9 408.8,461.1 404.1,450.9 398.6,435.5 394.4,420.4 390.4,399.8 385.9,363.4 382.9,317.4 381,255.4 380,173 379.6,44 482,44Z"/>
<path fill="#0020ff" d="M478.4,44 478.6,239.4 479.6,286.1 481.1,318 484.3,348 486.4,360.2 489.1,371.7 491.9,380.6 495.6,389.6 500,397.6 504.8,404.2 510.8,410.6 517.9,416.4 525.2,420.8 534.6,425.2 544.8,428.7 557,431.7 570.4,434 586.4,435.9 621.6,438.3 668.3,439.5 875,439.9 875,536.7 730.4,536.2 642.7,534.9 585.8,532.6 560.2,530.7 535.6,528.2 513.5,524.6 498.1,521.3 485.7,517.9 467.4,511.1 452,503.2 443.4,497.5 431.4,487.3 422.4,477.1 415.5,467.3 410.4,458.2 405.3,447 400.2,432.6 395.6,415.1 393.4,404.2 390,382.7 387.9,363.4 384.8,321.6 382.9,260.5 381.8,177.5 381.4,44 478.4,44Z"/>
<path fill="#0010ff" d="M474.7,44 474.8,240.1 475.6,286.1 477.3,322.5 480.4,353.1 484.9,375.5 487.6,384.4 491.5,394 495.7,401.7 500.7,408.7 506.7,415.1 513.5,420.5 521.1,425.2 529.8,429.2 539.7,432.5 551.2,435.4 565.3,437.9 581.3,439.8 616.5,442.1 663.2,443.3 875,443.5 875,535 735.5,534.5 649.4,533.3 585.8,530.6 560.2,528.7 539.7,526.4 517.6,523 495.1,517.9 479.1,512.8 466.9,507.7 457.1,502.6 442.2,492.4 436,487.1 426.1,476.4 415.5,461.2 410.4,451.4 405.3,439.2 402.4,430.4 399.4,420.2 395.1,400.8 390,364 386.7,317.4 384.6,260.5 383.6,178.1 383.1,44 474.7,44Z"/>
<path fill="#0000ff" d="M471,44 471,250.3 471.8,296.3 473.5,331.4 476.4,358.9 478.7,372.3 481.2,382.5 484.1,391.5 487.6,399.8 491.9,407.4 496.6,413.8 502.8,420.2 509.6,425.5 518.6,430.7 527.1,434.3 538.4,437.8 549.9,440.3 565.3,442.7 579.4,444.2 616.5,446.3 663.2,447.2 875,447.3 875,533.2 735.5,532.6 647.8,531.1 581.3,528.2 539.7,524 524.3,521.6 506.2,517.9 488.2,512.8 474.9,507.7 462.3,501.5 448.2,492.4 441.1,486.6 430.9,476.3 420.7,462.7 415.5,454 410.4,443.4 405.3,430.1 400.2,412.1 397.6,399.8 395.1,385.7 392.3,363.4 389,322.5 386.6,255.4 385.5,173 384.9,44 471,44Z"/>
<path fill="#0000ef" d="M467.1,44 467,255.4 467.7,302 469.3,337.2 472.1,365.3 474.5,378.7 476.8,388.3 479.9,397.9 483.3,405.5 487.2,412.5 491.9,418.9 498.1,425.3 505.1,430.6 513.5,435.3 522.4,439 533.9,442.5 544.8,444.8 560.2,447.1 574.2,448.5 606.9,450.3 656.8,451.2 875,451.2 875,531 740.6,530.5 653,529.1 596.6,526.8 549.9,522.7 519.8,517.9 503.2,513.9 484.2,507.7 472.6,502.6 462.3,496.9 448.6,487.3 441.8,481.4 431.5,470.4 421.2,456 415.5,445.7 410.4,434.1 405.7,420.2 400.2,398.5 396.8,378.7 394.4,360.3 390.7,311.6 388.8,260.5 387.6,177.5 387.1,44 467.1,44Z"/>
<path fill="#0000df" d="M463,44 462.7,265.6 463.4,311.6 464.7,342.9 467.7,373.6 471.8,394 474.9,403.6 478.3,411.5 482,418.3 486.7,424.7 492.3,430.5 498.7,435.4 506.4,439.8 515.4,443.6 525.6,446.7 537.1,449.3 566.6,452.9 601.1,454.7 646.6,455.5 875,455.2 875,528.9 730.4,528.2 653,526.7 586.4,523.6 544.8,519.1 534.6,517.5 512.5,512.8 495.6,507.7 482.7,502.6 472.4,497.5 456.6,487.3 444.7,477.1 436,467.9 427,456 420.7,445.8 415.5,435.6 410.4,422.7 405.3,405.8 401.7,388.9 399.6,377 396.5,353.1 395,337.8 393.3,311.6 390.9,245.2 389.8,173 389.2,44 463,44Z"/>
<path fill="#0000cf" d="M458.7,44 458.2,281 458.7,322.5 459.9,353.1 462.6,381.9 466.4,401.7 469.1,410.6 472.3,418.3 476.1,425.3 480.8,431.8 486.5,437.5 493,442.2 500.9,446.4 509,449.6 518.6,452.3 529.5,454.6 544.8,456.6 560.2,458 591.5,459.4 637.6,460 875,459.5 875,526.3 741.3,525.6 658.7,524.2 606.9,522 560.2,517.9 529.5,512.8 509.6,507.7 493,501.6 482.8,496.9 467.1,487.3 453.7,476.4 441.1,463.9 430.9,451.2 425.8,443.4 420.7,434.3 415.5,423.1 410.4,408.7 405.3,388.9 400.2,358.1 395.8,307.2 393.9,259.9 392.5,177.5 391.8,44 458.7,44Z"/>
<path fill="#0000bf" d="M454.2,44 453.1,296.9 453.4,337.8 454.3,365.9 456.4,392.1 458.1,404.9 460.2,415.1 462.9,424.1 465.8,431.1 469.4,437.5 473.4,442.6 479.5,448 485.9,451.8 491.7,454.4 501.3,457.5 510.9,459.7 523.1,461.5 549.9,463.8 578.7,464.8 617.1,465.1 875,464.1 875,523.6 746.4,522.9 658.1,521.1 595.5,517.9 552.4,512.8 527.9,507.7 511.4,502.6 499,497.5 489.4,492.4 481.5,487.3 468.1,476.4 441.1,449.4 430.9,436.8 425.8,428.9 420.7,419.3 415.5,407 410.4,390.4 406.8,373.6 405,364 402.3,342.9 400.2,322.9 398.8,302 396.4,239.4 395.1,163.8 394.5,44 454.2,44Z"/>
<path fill="#0000af" d="M875,469.4 875,520.2 756.6,519.6 679.2,518.3 632.5,516.3 586.7,512.8 553.4,507.7 533.3,502.6 519.8,497.5 510.2,492.4 503.5,487.3 499.4,481.5 499.5,477.1 503.2,474.8 511.5,472.9 524.3,472 730.4,469.7 875,469.4ZM449.2,44 448.4,203.7 446.2,394 445.3,406.8 443.4,415.1 441.1,418.8 436.7,418.9 430.9,414.8 425.8,408.1 420.7,398.6 415.5,385 410.4,365 405.3,331.7 401.8,286.1 399.8,239.4 398.5,162.2 397.9,44 449.2,44Z"/>
<path fill="#00009f" d="M875,475.1 875,516.3 725.3,514.9 669,513.5 637.6,511.8 593.6,507.7 566.3,502.6 551,497.5 543.3,492.4 543.1,491.7 543.1,487.3 543.5,487 549.3,484.6 557,482.5 573.6,480.5 601.1,478.7 646,477.1 709.3,475.9 828.9,474.9 875,474.8 875,475.1ZM443.4,44 442.1,224.1 441.1,272.6 439.4,319.3 437.5,347.4 435.6,362.1 433.6,369.1 431.2,374.9 430.9,375.2 426.4,375.3 425.8,375.1 420.7,367.4 415.5,352.1 410.4,324.9 406.4,281 404.7,249.7 403.2,193.5 401.9,44 443.4,44Z"/>
<path fill="#00008f" d="M875,482.2 875,510.9 761.7,509.7 683.7,507.6 627.5,502.6 607.3,497.5 606.7,492.4 617.8,489.9 634.7,487.3 679.8,484.8 777.1,482.5 875,481.7 875,482.2ZM436.5,44 435.4,157.1 433.3,240.1 430.9,283.8 428.3,300.8 425.8,311.8 420.7,311.2 415.5,291 410.5,235 408.4,157.1 407.3,44 436.5,44Z"/>
</g>
<g clip-path="url(#ax)" fill="none" stroke-width="1" shape-rendering="crispEdges">
<path stroke="#0000bf" d="M875,520.3 756.3,519.6 678.8,518.4 658.2,517.7 632.4,516.4 606.6,514.6 586.4,512.9 553,507.7 532.8,502.6 519.2,497.4 509.6,492.3 502.9,487.1 498.9,482 498.7,476.8 503.3,474.3 508.5,473 518.8,472 529.2,471.7 725.3,469.7 875,469M449.2,44 448.5,193.4 446.5,389.2 446.2,399.5 445.2,409.8 443.9,415 441.4,419.6 436.2,419.4 431.1,415.4 425.9,408.7 420.8,399.2 415.6,385.5 410.4,365.4 405.3,332 403.5,311.9 401.8,286.2 400.4,260.4 399.8,239.8 398.5,162.5 397.8,44"/>
<path stroke="#0030ff" d="M875,537.6 740.8,537.2 653,536 616.9,535 585.9,533.6 565.3,532.1 544.6,530.2 528.8,528.3 503.3,523.8 487.9,519.8 477.5,516.6 467.2,512.7 456.9,507.8 451.7,504.8 448,502.6 440.6,497.4 431.1,489.1 425.9,483.8 420.8,477.6 415.6,470.2 410.4,461.4 405.3,450.6 400.1,436.7 394.9,417.9 390.5,394.4 388.5,378.9 386.4,358.3 384.6,335.3 383.3,306.8 382.2,270.7 381,183.1 380.5,44M480.2,44 480.2,172.8 480.5,239.8 481.6,286.2 482.5,306.8 483.6,322.2 485.2,337.7 487.4,353.1 489.6,363.4 492.4,373.8 496.2,384.1 498.6,389.2 503.3,397.3 509.1,404.7 514.3,409.8 521,415 529.2,419.7 539.5,424.2 549.8,427.4 560.1,429.9 575.6,432.5 591.1,434.2 606.6,435.4 627.2,436.5 673.7,437.7 740.8,438.1 875,438"/>
<path stroke="#00afff" d="M875,548 730.5,547.5 642.7,546.5 606.6,545.6 575.6,544.3 555,543.1 534.3,541.3 511.4,538.6 498.2,536.4 483.4,533.5 464.9,528.3 451.3,523.2 440.8,518 431.1,512 425.2,507.7 419.3,502.6 415.6,498.8 410.4,492.9 406.1,487.1 402.8,482 399.8,476.8 394.9,466.9 390.8,456.2 386.1,440.7 383.7,430.4 379.5,406.9 377.3,389.2 375.4,368.6 374,348 372.7,317.1 371.7,281 370.6,193.4 370.1,44M505.9,44 506,152.2 506.6,214 508,260.4 509.1,281 510.5,296.5 512.3,311.9 514.9,327.4 517.4,337.7 520.5,348 524.8,358.3 529.2,366.4 534.3,373.7 539.5,379.4 544.7,384.1 552,389.2 560.1,393.6 570.4,397.8 580.8,401 591.1,403.4 606.6,406 622.1,407.9 637.6,409.2 658.2,410.4 704.7,411.7 766.6,412.3 875,412.4"/>
<path stroke="#20ffdf" d="M875,555.7 720.1,555.3 627.2,554.3 596.3,553.5 570.4,552.4 544.6,550.9 521,548.9 503.3,546.7 484.5,543.8 462.4,538.6 451.7,535.2 446.6,533.3 436.2,528.8 426,523.2 418.5,518 410.4,511.2 402.4,502.6 395,492.3 389.8,482.9 384.6,471.3 379.5,455.8 374.7,435.6 372.1,420.1 369.1,397.4 367.2,373.8 365.7,348 364.6,322.2 363.8,291.3 362.8,198.6 362.4,44M531,44 531.3,136.7 532,193.4 533.7,239.8 536.1,270.7 538,286.2 540.8,301.6 543.3,311.9 546.6,322.2 551,332.5 555,339.8 560.1,347.2 565.5,353.1 571.3,358.3 578.6,363.4 585.9,367.4 596.3,371.8 606.6,375.1 616.9,377.6 632.4,380.3 647.9,382.3 678.8,384.7 725.3,386.4 782.1,387.1 875,387.4"/>
<path stroke="#9fff60" d="M875,562 720.1,561.7 627.2,560.7 570.4,559.2 544.6,557.8 518.8,555.8 502.1,554.1 477.5,550.3 467.2,548.2 450.4,543.8 436.2,538.7 425.1,533.5 415.6,527.8 409.4,523.2 403.5,518 394.9,508.8 389.8,501.7 384.2,492.3 379.5,482.2 377.4,476.8 373.9,466.5 369.1,447.8 365.2,425.3 362.7,404.7 360.6,378.9 359.1,353.1 357.4,296.5 356.4,203.7 356,44M557.4,44 557.8,126.4 558.8,178 560.6,219.2 561.8,234.6 563.5,250.1 565.3,262.8 567.8,275.9 570.4,286.2 573.9,296.5 576,301.6 581.3,311.9 585.9,318.8 588.7,322.2 593.6,327.4 599.7,332.5 606.6,337.2 616.9,342.5 622.1,344.6 632.4,348 642.7,350.6 655.8,353.1 668.5,355 684,356.6 699.5,357.8 740.8,359.7 792.4,360.6 875,361"/>
<path stroke="#ffef00" d="M875,567.4 715,567 622.1,566.1 559.1,564.4 534.3,563 508.5,560.9 487.9,558.5 467.2,555 456.9,552.7 441.4,548.4 429.1,543.8 420.8,539.9 415.6,537.1 409.8,533.5 405.3,530.2 400.1,526 394.9,521.1 387.9,512.9 384.2,507.7 379.5,499.8 374.3,489.1 369.1,475.1 364.1,456.2 362.1,445.9 358.8,424.9 356.7,404.7 355.1,384.1 353.6,359.4 351.9,296.5 351,203.7 350.7,44M586.5,44 587.1,111 588.2,157.4 590.1,193.4 591.4,208.9 593.2,224.3 594.8,234.6 596.8,244.9 599.4,255.2 602.7,265.6 607.1,275.9 611.7,284.1 616.9,291.3 621.5,296.5 627.2,301.6 632.4,305.4 637.6,308.6 647.9,313.7 658.2,317.6 668.5,320.5 678.8,322.7 694.3,325.3 709.8,327.1 725.3,328.4 761.4,330.3 807.9,331.4 875,332"/>
<path stroke="#ff7000" d="M875,572.1 715,571.8 622.1,571 560.1,569.4 534.3,568.1 508.5,566.1 487.9,564 467.2,560.8 456.9,558.8 438.9,554.1 424.6,548.9 413.7,543.8 405,538.6 398.1,533.5 392.2,528.3 387.3,523.2 383,518 379.5,513.1 376.2,507.7 373.3,502.6 369.1,493.6 364.9,482 361.8,471.6 358.2,456.2 354.8,435.6 352.4,415 350.3,389.2 348.9,363.4 347.9,337.7 347.1,301.6 346.2,208.9 345.9,44M620.4,44 621.1,95.5 622.5,136.7 624.5,167.7 627.5,193.4 630.2,208.9 632.4,218.1 634.2,224.3 637.6,234.1 642.6,244.9 645.6,250.1 649.2,255.2 653.5,260.4 658.7,265.6 665.2,270.7 673.5,275.9 678.8,278.5 689.2,282.7 699.5,285.9 709.8,288.3 720.1,290.3 730.5,291.8 746,293.6 776.9,295.8 818.2,297.3 875,298.1"/>
<path stroke="#ff0000" d="M875,576.3 709.8,576 611.7,575.2 549.8,573.3 524,571.9 498.2,569.9 477.5,567.4 458.8,564.4 441.4,560.4 431.1,557.3 420.8,553.5 410.4,548.8 400.1,542.6 394.6,538.6 388.6,533.5 383.5,528.3 379.5,523.6 374.3,516.3 369.1,507.4 364.5,497.4 362.6,492.3 358.8,481 353.6,459.4 350.6,440.7 348.1,420.1 346.1,394.4 344.7,368.6 342.8,306.8 342,208.9 341.7,44M662.5,44 663.6,85.2 665.3,116.1 667.8,141.9 671,162.5 674.5,178 677.7,188.3 679.7,193.4 684,202.6 687.7,208.9 691.4,214 695.7,219.2 701,224.3 707.6,229.5 715,234 720.1,236.6 727.5,239.8 735.6,242.6 751.1,246.6 771.8,250.2 797.6,252.9 833.7,255 875,256.1"/>
<path stroke="#8f0000" d="M875,585 668.5,585 663.4,579.8 508.5,579.8 503.3,574.7 462,574.7 456.9,569.5 441.4,569.5 436.2,564.4 425.9,564.4 420.8,559.2 410.4,559.2 405.3,554.1 400.1,554.1 384.6,538.6 364,518 364,512.9 358.8,507.7 358.8,497.4 353.6,492.3 353.6,482 348.5,476.8 348.5,461.3 343.3,456.2 343.3,415 338.2,409.8 338.2,255.2 333,250.1 333,44M725.3,44 725.3,90.4 730.5,95.5 730.5,116.1 735.6,121.3 735.6,131.6 740.8,136.7 740.8,141.9 746,147 746,152.2 756.3,162.5 766.6,172.8 771.8,172.8 776.9,178 782.1,178 787.2,183.1 797.6,183.1 802.7,188.3 823.4,188.3 828.5,193.4 875,193.4"/>
</g>
<rect x="332" y="44" width="1" height="206" fill="#6e0a0a"/><rect x="668" y="584" width="207" height="1" fill="#800000"/>
<path clip-path="url(#tj)" d="M745.9,497.4 744.1,497.3 742.4,497.2 740.6,497.2 738.8,497.1 737.1,497.0 735.3,497.0 733.6,496.9 731.8,496.9 730.0,496.8 728.3,496.8 726.5,496.7 724.8,496.7 723.0,496.7 721.2,496.6 719.5,496.6 717.7,496.5 715.9,496.5 714.2,496.5 712.4,496.4 710.6,496.4 708.9,496.4 707.1,496.4 705.4,496.3 703.6,496.3 701.8,496.3 700.1,496.3 698.3,496.2 696.5,496.2 694.8,496.2 693.0,496.2 691.2,496.2 689.5,496.2 687.7,496.2 685.9,496.1 684.2,496.1 682.4,496.1 680.6,496.1 678.9,496.1 677.1,496.1 675.4,496.1 673.6,496.1 671.8,496.1 670.1,496.1 668.3,496.1 666.5,496.1 664.8,496.1 663.0,496.1 661.2,496.1 659.5,496.1 657.7,496.1 655.9,496.1 654.2,496.1 652.4,496.1 650.6,496.1 648.9,496.1 647.1,496.1 645.3,496.1 643.6,496.1 641.8,496.1 640.0,496.1 638.3,496.1 636.5,496.1 634.7,496.1 633.0,496.1 631.2,496.0 629.4,496.0 627.7,496.0 625.9,496.0 624.1,496.0 622.4,496.0 620.6,496.0 618.8,496.0 617.1,496.0 615.3,496.0 613.6,496.0 611.8,496.0 610.0,496.0 608.3,496.0 606.5,496.0 604.7,496.0 603.0,496.0 601.2,496.0 599.4,495.9 597.7,495.9 595.9,495.9 594.1,495.9 592.4,495.9 590.6,495.9 588.8,495.8 587.1,495.8 585.3,495.8 583.5,495.8 581.8,495.7 580.0,495.7 578.3,495.7 576.5,495.7 574.7,495.6 573.0,495.6 571.2,495.6 569.4,495.5 567.7,495.5 565.9,495.4 564.2,495.4 562.4,495.4 560.6,495.3 558.9,495.3 557.1,495.2 555.3,495.2 553.6,495.1 551.8,495.1 550.1,495.0 548.3,494.9 546.5,494.9 544.8,494.8 543.0,494.8 541.2,494.7 539.5,494.6 537.7,494.5 536.0,494.5 534.2,494.4 532.4,494.3 530.7,494.2 528.9,494.1 527.2,494.0 525.4,493.9 523.7,493.8 521.9,493.7 520.1,493.6 518.4,493.5 516.6,493.3 514.9,493.2 513.1,493.1 511.4,492.9 509.6,492.7 507.9,492.6 506.1,492.4 504.3,492.2 502.6,492.0 500.8,491.8 499.1,491.6 497.3,491.4 495.6,491.2 493.8,490.9 492.1,490.7 490.4,490.4 488.6,490.1 486.9,489.8 485.1,489.5 483.4,489.2 481.6,488.9 479.9,488.6 478.2,488.2 476.4,487.9 474.7,487.5 473.0,487.1 471.2,486.7 469.5,486.3 467.8,485.9 466.1,485.5 464.3,485.0 462.6,484.6 460.9,484.1 459.2,483.6 457.5,483.2 455.8,482.7 454.1,482.2 452.4,481.7 450.7,481.1 449.0,480.6 447.4,480.0 445.7,479.5 444.0,478.9 442.4,478.3 440.7,477.8 439.1,477.2 437.4,476.6 435.8,475.9 434.2,475.3 432.5,474.7 430.9,474.0 429.3,473.4 427.7,472.7 426.1,472.0 424.5,471.3 423.0,470.6 421.4,469.8 419.8,469.0 418.3,468.2 416.7,467.4 415.2,466.5 413.7,465.6 412.2,464.7 410.7,463.7 409.2,462.7 407.8,461.6 406.3,460.5 404.9,459.4 403.4,458.2 402.0,456.9 400.7,455.6 399.6,454.3 398.5,452.9 397.7,451.4 397.2,449.9 396.9,448.3 397.0,446.6 397.4,444.9 398.0,443.4 399.0,442.0 400.2,440.8 401.6,439.8 403.2,438.9 404.8,438.1 406.5,437.4 408.2,436.6 409.9,435.9 411.6,435.3 413.3,434.6 414.9,433.9 416.6,433.3 418.3,432.7 420.0,432.1 421.6,431.5 423.3,430.9 425.0,430.3 426.6,429.7 428.3,429.1 429.9,428.6 431.6,428.0 433.3,427.4 434.9,426.9 436.6,426.3 438.2,425.8 439.9,425.2 441.5,424.7 443.2,424.1 444.8,423.5 446.5,423.0 448.1,422.4 449.8,421.8 451.5,421.2 453.1,420.6 454.8,420.0 456.4,419.4 458.1,418.8 459.7,418.2 461.4,417.6 463.1,417.0 464.7,416.4 466.4,415.7 468.0,415.1 469.7,414.5 471.3,413.8 473.0,413.2 474.7,412.6 476.3,411.9 478.0,411.3 479.6,410.6 481.3,410.0 482.9,409.4 484.6,408.7 486.2,408.1 487.9,407.4 489.5,406.8 491.2,406.2 492.8,405.5 494.4,404.9 496.1,404.2 497.7,403.6 499.3,403.0 501.0,402.4 502.6,401.7 504.2,401.1 505.9,400.5 507.5,399.9 509.2,399.3 510.8,398.8 512.5,398.2 514.2,397.7 515.9,397.2 517.6,396.7 519.3,396.2 521.0,395.8 522.8,395.4 524.6,395.0 526.4,394.7 528.3,394.4 530.1,394.3 531.8,394.4 533.4,394.8 534.9,395.5 536.2,396.3 537.5,397.4 538.7,398.7 539.8,400.1 540.8,401.6 541.7,403.2 542.6,404.8 543.4,406.4 544.2,408.1 544.9,409.8 545.6,411.4 546.2,413.1 546.8,414.8 547.4,416.4 548.0,418.1 548.5,419.8 549.0,421.5 549.5,423.2 549.9,424.9 550.4,426.6 550.8,428.3 551.3,430.0 551.7,431.6 552.2,433.3 552.6,435.0 553.0,436.7 553.5,438.4 553.9,440.1 554.4,441.8 554.8,443.5 555.2,445.2 555.7,446.9 556.1,448.6 556.6,450.3 557.0,452.0 557.5,453.7 557.9,455.4 558.4,457.1 558.9,458.8 559.4,460.5 559.9,462.2 560.4,463.9 560.9,465.6 561.4,467.3 561.9,469.0 562.5,470.7 563.0,472.4 563.6,474.1 564.1,475.8 564.7,477.5 565.3,479.2 565.9,480.9 566.5,482.6 567.1,484.3 567.6,486.0 568.2,487.6 568.8,489.3 569.4,491.0 570.0,492.6 570.5,494.3 571.1,495.9 571.7,497.6 572.2,499.2 572.7,500.8 573.3,502.4 573.8,504.0 574.3,505.6 574.8,507.2 575.3,508.8 575.8,510.4 576.3,512.1 576.8,513.7 577.3,515.4 577.9,517.1 578.4,518.8 578.9,520.5 579.5,522.3 580.0,524.2 580.6,526.0 581.2,527.9 581.8,529.9 582.4,532.0 583.0,534.0 583.6,536.0 584.1,537.7 584.4,539.2 584.5,540.2 584.2,540.6 583.7,540.4 582.8,539.6 581.8,538.4 580.6,536.9 579.3,535.2 578.1,533.4 576.8,531.7 575.7,530.0 574.7,528.4 573.7,526.9 572.7,525.4 571.8,523.9 570.9,522.4 570.0,520.9 569.0,519.4 568.1,517.9 567.2,516.4 566.4,514.9 565.5,513.4 564.6,511.9 563.7,510.4 562.8,508.9 561.9,507.4 561.1,505.9 560.2,504.4 559.3,502.9 558.5,501.3 557.6,499.8 556.7,498.3 555.9,496.7 555.0,495.2 554.2,493.7 553.3,492.1 552.5,490.6 551.6,489.0 550.8,487.5 550.0,485.9 549.1,484.4 548.3,482.8 547.5,481.3 546.6,479.7 545.8,478.2 545.0,476.6 544.1,475.0 543.3,473.5 542.5,471.9 541.7,470.3 540.9,468.8 540.0,467.2 539.2,465.6 538.4,464.1 537.6,462.5 536.8,460.9 535.9,459.3 535.1,457.8 534.3,456.2 533.5,454.6 532.6,453.0 531.8,451.5 531.0,449.9 530.2,448.3 529.3,446.8 528.5,445.2 527.6,443.7 526.8,442.1 525.9,440.6 525.0,439.0 524.1,437.5 523.2,436.0 522.3,434.5 521.4,432.9 520.5,431.4 519.6,429.9 518.7,428.4 517.7,427.0 516.8,425.5 515.8,424.0 514.8,422.6 513.8,421.1 512.8,419.7 511.8,418.2 510.7,416.8 509.7,415.4 508.6,414.0 507.5,412.6 506.5,411.3 505.4,409.9 504.2,408.5 503.1,407.2 502.0,405.9 500.8,404.5 499.7,403.2 498.5,401.9 497.3,400.6 496.1,399.3 494.9,398.0 493.7,396.7 492.5,395.4 491.3,394.2 490.1,392.9 488.8,391.7 487.6,390.4 486.3,389.2 485.1,387.9 483.8,386.7 482.5,385.5 481.2,384.3 480.0,383.1 478.7,381.9 477.4,380.7 476.1,379.5 474.8,378.3 473.5,377.1 472.1,375.9 470.8,374.8 469.5,373.6 468.2,372.4 466.8,371.3 465.5,370.1 464.2,369.0 462.8,367.8 461.5,366.7 460.2,365.5 458.8,364.4 457.5,363.2 456.1,362.1 454.8,361.0 453.4,359.8 452.1,358.7 450.7,357.6 449.3,356.5 448.0,355.3 446.6,354.2 445.3,353.1 443.9,352.0 442.5,350.9 441.2,349.8 439.8,348.6 438.4,347.5 437.1,346.4 435.7,345.3 434.3,344.2 432.9,343.1 431.6,342.0 430.2,340.9 428.8,339.8 427.4,338.7 426.1,337.6 424.7,336.4 423.3,335.3 421.9,334.2 420.5,333.1 419.2,332.0 417.8,330.9 416.4,329.8 415.0,328.8 413.6,327.7 412.3,326.6 410.9,325.5 409.5,324.4 408.1,323.3 406.7,322.2 405.3,321.1 404.0,320.1 402.6,319.0 401.2,317.9 399.8,316.8 398.4,315.8 397.0,314.7 395.7,313.6 394.3,312.5 393.0,311.4 391.6,310.2 390.3,309.1 389.0,307.8 387.7,306.6 386.4,305.3 385.2,304.0 384.0,302.6 382.8,301.1 381.7,299.6 380.6,298.0 379.7,296.4 379.0,294.8 378.6,293.3 378.7,291.9 379.2,290.6 380.2,289.6 381.4,288.7 382.8,288.1 384.4,287.6 386.1,287.3 387.9,287.1 389.9,287.1 391.8,287.1 393.8,287.2 395.7,287.3 397.6,287.5 399.5,287.6 401.3,287.8 403.1,288.1 404.9,288.3 406.6,288.5 408.4,288.8 410.1,289.0 411.8,289.3 413.5,289.5 415.1,289.8 416.8,290.0 418.5,290.2 420.2,290.5 421.9,290.6 423.6,290.8 425.3,291.0 427.0,291.2 428.8,291.3 430.5,291.4 432.3,291.6 434.0,291.7 435.8,291.8 437.6,291.9 439.3,292.0 441.1,292.2 442.9,292.3 444.7,292.4 446.5,292.6 448.3,292.7 450.1,292.9 451.8,293.0 453.6,293.2 455.4,293.4 457.2,293.6 459.0,293.8 460.8,294.1 462.5,294.3 464.3,294.4 466.1,294.6 467.8,294.7 469.6,294.8 471.3,294.7 473.1,294.7 474.8,294.5 476.5,294.2 478.2,293.9 479.9,293.4 481.6,292.8 483.3,292.0 484.9,291.2 486.4,290.2 487.8,289.1 489.0,287.9 490.0,286.7 490.8,285.3 491.3,283.8 491.6,282.2 491.6,280.6 491.3,278.9 490.9,277.1 490.2,275.4 489.4,273.7 488.5,271.9 487.5,270.3 486.4,268.7 485.3,267.1 484.2,265.7 483.0,264.3 481.8,263.0 480.6,261.7 479.4,260.5 478.2,259.3 477.0,258.1 475.7,256.9 474.5,255.7 473.2,254.5 471.9,253.3 470.7,252.2 469.4,251.0 468.1,249.8 466.8,248.7 465.5,247.5 464.2,246.4 462.9,245.2 461.5,244.1 460.2,242.9 458.9,241.8 457.5,240.6 456.2,239.5 454.9,238.4 453.5,237.2 452.2,236.1 450.8,234.9 449.5,233.8 448.1,232.6 446.8,231.5 445.5,230.3 444.1,229.1 442.8,228.0 441.4,226.8 440.1,225.6 438.8,224.5 437.5,223.3 436.2,222.1 434.8,220.9 433.5,219.7 432.2,218.5 430.9,217.2 429.7,216.0 428.4,214.8 427.1,213.5 425.8,212.3 424.5,211.1 423.3,209.9 422.0,208.6 420.7,207.4 419.5,206.2 418.2,205.0 416.9,203.8 415.6,202.6 414.3,201.4 413.1,200.3 411.8,199.1 410.5,198.0 409.1,196.9 407.8,195.8 406.5,194.8 405.1,193.7 403.8,192.7 402.4,191.7 401.0,190.6 399.6,189.6 398.1,188.5 396.7,187.5 395.2,186.4 393.7,185.3 392.1,184.2 390.6,183.0 389.1,181.9 387.6,180.7 386.1,179.5 384.7,178.2 383.4,176.9 382.2,175.6 381.0,174.2 380.0,172.8 379.1,171.4 378.4,169.9 377.8,168.4 377.3,166.9 377.1,165.3 377.3,163.8 377.8,162.4 378.7,161.3 379.9,160.4 381.3,159.8 382.8,159.3 384.4,159.1 386.2,159.0 388.0,159.1 389.9,159.3 391.8,159.5 393.8,159.9 395.7,160.2 397.7,160.6 399.6,160.9 401.5,161.2 403.3,161.5 405.1,161.8 406.8,162.0 408.6,162.2 410.3,162.4 412.0,162.6 413.7,162.8 415.4,163.0 417.1,163.3 418.8,163.5 420.5,163.8 422.2,164.1 423.9,164.3 425.6,164.6 427.3,164.9 429.0,165.2 430.7,165.5 432.5,165.8 434.2,166.1 435.9,166.4 437.6,166.7 439.4,167.0 441.1,167.3 442.8,167.6 444.6,167.8 446.3,168.1 448.1,168.3 449.8,168.6 451.6,168.8 453.4,169.0 455.2,169.2 456.9,169.4 458.7,169.5 460.5,169.6 462.3,169.7 464.1,169.8 465.9,169.9 467.7,169.9 469.6,169.9 471.4,169.9 473.2,169.8 475.1,169.7 476.9,169.5 478.6,169.2 480.3,168.9 482.0,168.4 483.5,167.7 484.9,166.9 486.1,165.9 487.2,164.6 488.2,163.2 488.9,161.5 489.4,159.8 489.6,158.0 489.6,156.3 489.3,154.6 488.9,152.9 488.3,151.2 487.6,149.6 486.7,148.0 485.7,146.5 484.7,144.9 483.6,143.5 482.6,142.0 481.4,140.6 480.3,139.2 479.2,137.9 478.0,136.6 476.8,135.3 475.6,134.0 474.3,132.8 473.1,131.5 471.8,130.3 470.6,129.1 469.3,127.9 468.0,126.7 466.7,125.5 465.4,124.3 464.2,123.1 462.9,121.9 461.6,120.7 460.3,119.5 459.0,118.3 457.7,117.2 456.3,116.0 455.0,114.8 453.7,113.6 452.4,112.5 451.1,111.3 449.7,110.2 448.4,109.0 447.1,107.8 445.7,106.7 444.4,105.6 443.0,104.4 441.7,103.3 440.3,102.1 439.0,101.0 437.6,99.9 436.2,98.8 434.9,97.6 433.5,96.5 432.1,95.4 430.8,94.3 429.4,93.2 428.0,92.1 426.6,91.0 425.2,89.9 423.8,88.8 422.4,87.8 421.1,86.7 419.7,85.6 418.3,84.5 416.9,83.4 415.5,82.3 414.1,81.2 412.8,80.1 411.4,79.0 410.0,77.9 408.7,76.8 407.3,75.6 406.0,74.5 404.6,73.4 403.3,72.2 402.0,71.1 400.6,69.9 399.3,68.8 398.0,67.6 396.7,66.4 395.4,65.2 394.2,64.0 392.9,62.7 391.7,61.5 390.4,60.2 389.2,59.0 388.0,57.7 386.8,56.4 385.6,55.1 384.5,53.7 383.3,52.4 382.2,51.0 381.1,49.6 380.0,48.3 378.9,46.8 377.8,45.4 376.7,44.0 375.6,42.6 374.4,41.3 373.3,39.9 372.1,38.6 371.0,37.3 369.8,36.0 368.5,34.7 367.3,33.5 365.9,32.4 M418.0,32.9 419.3,33.3 420.5,33.8 421.8,34.3 423.0,34.9 424.3,35.4 425.5,36.1 426.7,36.7 427.9,37.4 429.1,38.0 430.3,38.7 431.5,39.4 432.7,40.1 433.9,40.7 435.1,41.3 436.3,42.0 437.5,42.5 438.7,43.1 439.9,43.6 441.1,44.1 442.4,44.5 443.6,44.9 444.9,45.3 446.2,45.6 447.5,46.0 448.7,46.3 450.0,46.5 451.3,46.8 452.7,47.0 454.0,47.2 455.3,47.3 456.7,47.5 458.0,47.6 459.4,47.7 460.8,47.8 462.2,47.9 463.6,47.9 465.0,48.0 466.4,47.9 467.8,47.9 469.2,47.8 470.6,47.7 472.0,47.6 473.3,47.4 474.7,47.2 476.0,46.9 477.3,46.6 478.6,46.2 479.8,45.7 481.0,45.3 482.2,44.7 483.4,44.1 484.5,43.4 485.5,42.7 486.5,41.8 487.4,40.9 488.2,39.8 488.9,38.7 489.6,37.5 490.1,36.1" fill="none" stroke="#000" stroke-width="5.5" stroke-linejoin="round" shape-rendering="crispEdges"/>
<g font-family="Liberation Sans, sans-serif" font-size="13" fill="#262626">
<text x="333.0" y="604" text-anchor="middle">0.4</text><text x="327" y="590.9" text-anchor="end">0.4</text><text x="384.6" y="604" text-anchor="middle">0.6</text><text x="327" y="539.4" text-anchor="end">0.6</text><text x="436.2" y="604" text-anchor="middle">0.8</text><text x="327" y="487.9" text-anchor="end">0.8</text><text x="487.9" y="604" text-anchor="middle">1</text><text x="327" y="436.3" text-anchor="end">1</text><text x="539.5" y="604" text-anchor="middle">1.2</text><text x="327" y="384.8" text-anchor="end">1.2</text><text x="591.1" y="604" text-anchor="middle">1.4</text><text x="327" y="333.3" text-anchor="end">1.4</text><text x="642.7" y="604" text-anchor="middle">1.6</text><text x="327" y="281.8" text-anchor="end">1.6</text><text x="694.3" y="604" text-anchor="middle">1.8</text><text x="327" y="230.2" text-anchor="end">1.8</text><text x="746.0" y="604" text-anchor="middle">2</text><text x="327" y="178.7" text-anchor="end">2</text><text x="797.6" y="604" text-anchor="middle">2.2</text><text x="327" y="127.2" text-anchor="end">2.2</text><text x="849.2" y="604" text-anchor="middle">2.4</text><text x="327" y="75.7" text-anchor="end">2.4</text>
</g>
<text x="604" y="622" text-anchor="middle" font-family="Liberation Serif, serif" font-size="15" letter-spacing="0.5" fill="#333">A-B bond distance (Å)</text>
<text transform="translate(300.5,313.4) rotate(-90)" text-anchor="middle" font-family="Liberation Serif, serif" font-size="15" letter-spacing="0.5" fill="#333">B-C bond distance (Å)</text>
</svg>
<div class="ew" style="left:27px;top:48px;width:123px;height:167px"></div><div class="eg" style="left:26px;top:47px;width:123px;height:167px"></div><div class="abs" style="left:56px;top:47px;width:66px;height:2px;background:#f0f0f0"></div>
<div class="t" style="left:58px;top:43.2px;letter-spacing:-0.07px">Atom Types</div>
<div class="t" style="left:-12.200000000000003px;top:65.7px;width:200px;text-align:center;">Atom A</div>
<div class="pp" style="left:41px;top:82px;width:99px;height:22px"><div class="pa"></div></div><svg class="abs" style="left:126.5px;top:89.0px" width="10" height="8"><path d="M1.5,1.8 L5,5.4 L8.5,1.8" fill="none" stroke="#404040" stroke-width="1.9"/></svg><div class="t" style="left:44.4px;top:87.3px;">hydrogen</div>
<div class="t" style="left:-11.799999999999997px;top:115.5px;width:200px;text-align:center;">Atom B</div>
<div class="pp" style="left:39px;top:132px;width:99px;height:22px"><div class="pa"></div></div><svg class="abs" style="left:124.5px;top:139.0px" width="10" height="8"><path d="M1.5,1.8 L5,5.4 L8.5,1.8" fill="none" stroke="#404040" stroke-width="1.9"/></svg><div class="t" style="left:42.4px;top:137.4px;">hydrogen</div>
<div class="t" style="left:-12.700000000000003px;top:166.2px;width:200px;text-align:center;">Atom C</div>
<div class="pp" style="left:40px;top:180px;width:99px;height:22px"><div class="pa"></div></div><svg class="abs" style="left:125.5px;top:187.0px" width="10" height="8"><path d="M1.5,1.8 L5,5.4 L8.5,1.8" fill="none" stroke="#404040" stroke-width="1.9"/></svg><div class="t" style="left:43.7px;top:185.7px;">hydrogen</div>
<div class="btn" style="left:162px;top:46px;width:103px;height:51px"></div>
<div class="t" style="left:113.5px;top:65.7px;width:200px;text-align:center;">Update</div>
<div class="ew" style="left:163px;top:113px;width:105px;height:39px"></div><div class="eg" style="left:162px;top:112px;width:105px;height:39px"></div><div class="abs" style="left:166px;top:112px;width:62px;height:2px;background:#f0f0f0"></div>
<div class="t" style="left:169.2px;top:106.4px;letter-spacing:-0.15px">Delta Value</div>
<div class="ed" style="left:172px;top:120px;width:89px;height:24px"></div><div class="t" style="left:116.5px;top:125.8px;width:200px;text-align:center;">0.424</div>
<div class="abs" style="left:163px;top:158px;width:105px;height:58px;background:#fcfcfc"></div>
<div class="ew" style="left:164px;top:166px;width:104px;height:50px"></div><div class="eg" style="left:163px;top:165px;width:104px;height:50px"></div><div class="abs" style="left:167px;top:165px;width:88px;height:2px;background:#fcfcfc"></div>
<div class="t" style="left:170.6px;top:159.6px;">Calculation Type</div>
<div class="abs" style="left:173px;top:193px;width:66px;height:14px;background:#f0f0f0"></div>
<svg class="abs" style="left:173px;top:175px" width="16" height="33"><circle cx="7.4" cy="7.4" r="5.9" fill="#fff" stroke="#4a4a4a" stroke-width="1.1"/><circle cx="7.4" cy="7.4" r="3.3" fill="#1e1e1e"/><circle cx="7.4" cy="25.5" r="5.9" fill="#fff" stroke="#4a4a4a" stroke-width="1.1"/></svg>
<div class="t" style="left:191.2px;top:176.6px;">Dynamics</div>
<div class="t" style="left:191.2px;top:194.6px;">MEP</div>
<div class="ew" style="left:28px;top:233px;width:121px;height:36px"></div><div class="eg" style="left:27px;top:232px;width:121px;height:36px"></div><div class="abs" style="left:32px;top:232px;width:34px;height:2px;background:#f0f0f0"></div>
<div class="t" style="left:34.3px;top:225.5px;letter-spacing:-0.2px">Steps</div>
<div class="ed" style="left:42px;top:239px;width:90px;height:19px"></div><div class="t" style="left:-13.0px;top:242.5px;width:200px;text-align:center;">700</div>
<div class="ew" style="left:163px;top:231px;width:108px;height:38px"></div><div class="eg" style="left:162px;top:230px;width:108px;height:38px"></div><div class="abs" style="left:167px;top:230px;width:91px;height:2px;background:#f0f0f0"></div>
<div class="t" style="left:169.6px;top:224.3px;letter-spacing:-0.07px">Cutoff (Kcal/ mol)</div>
<div class="ed" style="left:177px;top:239px;width:83px;height:22px"></div><div class="t" style="left:118.5px;top:243.7px;width:200px;text-align:center;">-20</div>
<div class="ew" style="left:26px;top:281px;width:246px;height:42px"></div><div class="eg" style="left:25px;top:280px;width:246px;height:42px"></div><div class="abs" style="left:30px;top:280px;width:75px;height:2px;background:#f0f0f0"></div>
<div class="t" style="left:32.5px;top:274.5px;letter-spacing:-0.2px">Collision Angle</div>
<div class="abs" style="left:37px;top:288px;width:230px;height:21px;background:#e4e4e4"></div>
<div class="abs" style="left:37px;top:288px;width:16px;height:21px;background:#f2f2f2;border-right:2px solid #6d6d6d;border-bottom:2px solid #6d6d6d"></div>
<div class="abs" style="left:234px;top:288px;width:17px;height:21px;background:#f2f2f2;border-right:2px solid #6d6d6d;border-bottom:2px solid #6d6d6d"></div>
<div class="abs" style="left:251px;top:288px;width:16px;height:21px;background:#f2f2f2;border-right:2px solid #6d6d6d;border-bottom:2px solid #6d6d6d"></div>
<div class="abs" style="left:53px;top:307px;width:181px;height:2px;background:#6d6d6d"></div>
<svg class="abs" style="left:37px;top:288px" width="230" height="21"><path d="M7,10 L11,6 L11,14Z" fill="#6d6d6d"/><path d="M221,6 L225,10 L221,14Z" fill="#6d6d6d"/></svg>
<div class="ew" style="left:25px;top:342px;width:248px;height:109px"></div><div class="eg" style="left:24px;top:341px;width:248px;height:109px"></div><div class="abs" style="left:106px;top:341px;width:83px;height:2px;background:#f0f0f0"></div>
<div class="t" style="left:110.1px;top:335.7px;letter-spacing:-0.28px">Initial Conditions</div>
<div class="t" style="left:-13.299999999999997px;top:349.9px;width:200px;text-align:center;">AB Distance (A)</div>
<div class="ed" style="left:36px;top:369px;width:101px;height:19px"></div><div class="t" style="left:-13.5px;top:372.7px;width:200px;text-align:center;">2.0</div>
<div class="t" style="left:111.5px;top:349.7px;width:200px;text-align:center;letter-spacing:-0.3px">AB Momentum</div>
<div class="ed" style="left:159px;top:369px;width:101px;height:19px"></div><div class="t" style="left:109.5px;top:372.7px;width:200px;text-align:center;">-5.2</div>
<div class="t" style="left:-14.900000000000006px;top:399.9px;width:200px;text-align:center;letter-spacing:-0.09px">BC Distance (A)</div>
<div class="ed" style="left:35px;top:418px;width:101px;height:20px"></div><div class="t" style="left:-14.5px;top:422.2px;width:200px;text-align:center;">0.74</div>
<div class="t" style="left:109.30000000000001px;top:399.7px;width:200px;text-align:center;letter-spacing:-0.45px">BC Momentum</div>
<div class="ed" style="left:159px;top:418px;width:101px;height:20px"></div><div class="t" style="left:109.5px;top:422.2px;width:200px;text-align:center;">-2.5</div>
<div class="abs" style="left:24px;top:464px;width:246px;height:130px;background:#fff;border:1px solid #828790"></div><div class="abs" style="left:25px;top:479px;width:227px;height:14px;background:#aaaaaa"></div><div class="abs" style="left:25px;top:465px;width:228px;height:112px;overflow:hidden"><div class="t" style="left:1.3px;top:2.2px;letter-spacing:-0.12px">Contour Plot</div><div class="t" style="left:1.3px;top:16.2px;letter-spacing:-0.12px">Surface Plot</div><div class="t" style="left:1.3px;top:30.2px;letter-spacing:-0.12px">Internuclear Distances vs Time</div><div class="t" style="left:1.3px;top:44.2px;letter-spacing:-0.12px">Potential Energy vs Time</div><div class="t" style="left:1.3px;top:58.2px;letter-spacing:-0.12px">Kinetic Energy vs Time</div><div class="t" style="left:1.3px;top:72.2px;letter-spacing:-0.12px">Internuclear Velocities vs Internuclear Distance</div><div class="t" style="left:1.3px;top:86.2px;letter-spacing:-0.12px">Internuclear Accelerations vs Internuclear Distance</div><div class="t" style="left:1.3px;top:100.2px;letter-spacing:-0.12px">Internuclear Momenta vs Internuclear Distance</div></div><div class="abs" style="left:253px;top:465px;width:16px;height:112px;background:#f0f0f0"></div><div class="abs" style="left:253px;top:482px;width:15px;height:50px;background:#c8c8c8"></div><div class="abs" style="left:25px;top:577px;width:244px;height:16px;background:#f0f0f0"></div><div class="abs" style="left:42px;top:577px;width:175px;height:16px;background:#c8c8c8"></div><svg class="abs" style="left:25px;top:465px" width="244" height="128"><g fill="none" stroke="#505050" stroke-width="1.9"><path d="M231.5,12 L235.5,8 L239.5,12"/><path d="M231.5,101 L235.5,105 L239.5,101"/><path d="M10,115.5 L6,119.5 L10,123.5"/><path d="M217,115.5 L221,119.5 L217,123.5"/></g></svg>
</body></html>
